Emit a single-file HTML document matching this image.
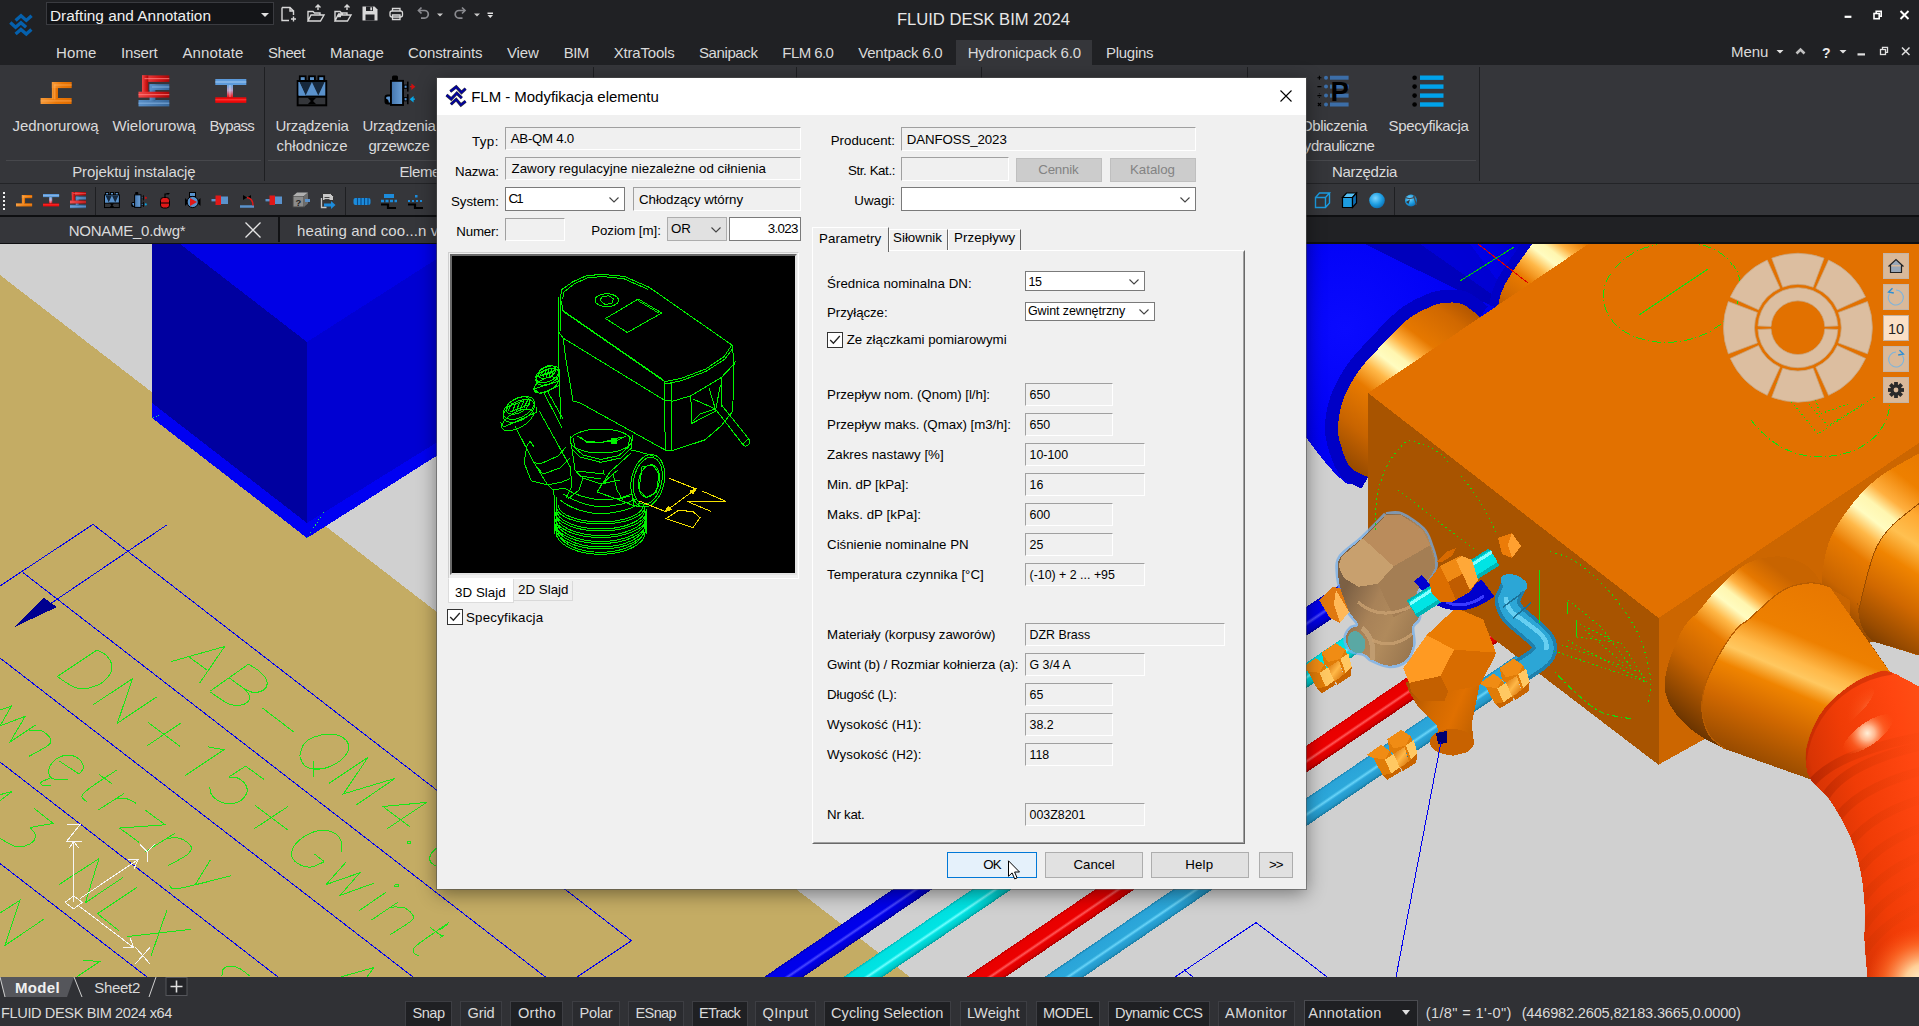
<!DOCTYPE html>
<html><head><meta charset="utf-8"><title>FLUID DESK BIM 2024</title>
<style>
html,body{margin:0;padding:0;}
body{width:1919px;height:1026px;overflow:hidden;position:relative;background:#35363a;font-family:"Liberation Sans",sans-serif;}
.t{position:absolute;white-space:pre;line-height:1;font-family:"Liberation Sans",sans-serif;}
.a{position:absolute;}
svg{position:absolute;overflow:visible;}

</style></head>
<body>
<svg style="left:0;top:244px" width="1919" height="733" viewBox="0 244 1919 733" shape-rendering="crispEdges">
<defs><linearGradient id="gBlueP" gradientUnits="userSpaceOnUse" x1="0" y1="0" x2="12.4" y2="18.2"><stop offset="0" stop-color="#0000b0"/><stop offset="0.1" stop-color="#0000e8"/><stop offset="0.5" stop-color="#0000ec"/><stop offset="0.6" stop-color="#4848ff"/><stop offset="0.7" stop-color="#0000e8"/><stop offset="0.9" stop-color="#0000d0"/><stop offset="1" stop-color="#0000a0"/></linearGradient><linearGradient id="gCyanP" gradientUnits="userSpaceOnUse" x1="0" y1="0" x2="12.4" y2="18.2"><stop offset="0" stop-color="#00b8b8"/><stop offset="0.1" stop-color="#00e0e0"/><stop offset="0.5" stop-color="#00e4e4"/><stop offset="0.6" stop-color="#70ffff"/><stop offset="0.7" stop-color="#00e0e0"/><stop offset="0.9" stop-color="#00c8c8"/><stop offset="1" stop-color="#00a0a0"/></linearGradient><linearGradient id="gRedP" gradientUnits="userSpaceOnUse" x1="0" y1="0" x2="12.4" y2="18.2"><stop offset="0" stop-color="#c00000"/><stop offset="0.1" stop-color="#e80000"/><stop offset="0.5" stop-color="#ec0000"/><stop offset="0.6" stop-color="#ff5858"/><stop offset="0.7" stop-color="#e80000"/><stop offset="0.9" stop-color="#d80000"/><stop offset="1" stop-color="#a80000"/></linearGradient><linearGradient id="gLbP" gradientUnits="userSpaceOnUse" x1="0" y1="0" x2="12.4" y2="18.2"><stop offset="0" stop-color="#1c84b0"/><stop offset="0.1" stop-color="#2aa4d8"/><stop offset="0.5" stop-color="#2ca8da"/><stop offset="0.6" stop-color="#68d4f8"/><stop offset="0.7" stop-color="#2aa4d8"/><stop offset="0.9" stop-color="#2498c8"/><stop offset="1" stop-color="#1c7ca4"/></linearGradient><linearGradient id="gCylA" gradientUnits="userSpaceOnUse" x1="1470" y1="300" x2="1340" y2="470"><stop offset="0" stop-color="#a85000"/><stop offset="0.12" stop-color="#d06800"/><stop offset="0.28" stop-color="#e67800"/><stop offset="0.35" stop-color="#ffb040"/><stop offset="0.41" stop-color="#fff6b0"/><stop offset="0.46" stop-color="#fffcc0"/><stop offset="0.53" stop-color="#ffb848"/><stop offset="0.62" stop-color="#e87a00"/><stop offset="0.8" stop-color="#c86400"/><stop offset="1" stop-color="#8a4400"/></linearGradient><linearGradient id="gCylB" gradientUnits="userSpaceOnUse" x1="1580" y1="215" x2="1500.4" y2="317.8"><stop offset="0" stop-color="#d86c00"/><stop offset="0.15" stop-color="#e67800"/><stop offset="0.27" stop-color="#ffb040"/><stop offset="0.35" stop-color="#fff6b0"/><stop offset="0.42" stop-color="#fffcc0"/><stop offset="0.52" stop-color="#ffb848"/><stop offset="0.65" stop-color="#e87a00"/><stop offset="0.85" stop-color="#d06800"/><stop offset="1" stop-color="#a85000"/></linearGradient><radialGradient id="gBlueBig" gradientUnits="userSpaceOnUse" cx="1345" cy="330" r="230" ><stop offset="0" stop-color="#0a0aff"/><stop offset="0.55" stop-color="#0000f4"/><stop offset="0.8" stop-color="#0000d8"/><stop offset="1" stop-color="#0000b0"/></radialGradient><linearGradient id="gC1" gradientUnits="userSpaceOnUse" x1="1760" y1="556" x2="1650" y2="698"><stop offset="0" stop-color="#c86400"/><stop offset="0.12" stop-color="#e67800"/><stop offset="0.2" stop-color="#ffb040"/><stop offset="0.26" stop-color="#fff6b0"/><stop offset="0.32" stop-color="#fffcc0"/><stop offset="0.4" stop-color="#ffb848"/><stop offset="0.5" stop-color="#e87a00"/><stop offset="0.7" stop-color="#c86400"/><stop offset="0.9" stop-color="#8a4400"/><stop offset="1" stop-color="#6a3400"/></linearGradient><linearGradient id="gCone" gradientUnits="userSpaceOnUse" x1="1830" y1="590" x2="1745" y2="790"><stop offset="0" stop-color="#e87800"/><stop offset="0.25" stop-color="#ee8000"/><stop offset="0.36" stop-color="#ffb848"/><stop offset="0.42" stop-color="#ffc860"/><stop offset="0.5" stop-color="#f08400"/><stop offset="0.65" stop-color="#d06800"/><stop offset="0.85" stop-color="#9a4c00"/><stop offset="1" stop-color="#6a3400"/></linearGradient><linearGradient id="gC3" gradientUnits="userSpaceOnUse" x1="1919" y1="440" x2="1800" y2="594"><stop offset="0" stop-color="#e87800"/><stop offset="0.2" stop-color="#ee8000"/><stop offset="0.33" stop-color="#ffb040"/><stop offset="0.4" stop-color="#fff6b0"/><stop offset="0.47" stop-color="#fffcc0"/><stop offset="0.55" stop-color="#ffb848"/><stop offset="0.66" stop-color="#e87a00"/><stop offset="0.85" stop-color="#c86400"/><stop offset="1" stop-color="#8a4400"/></linearGradient><linearGradient id="gC4" gradientUnits="userSpaceOnUse" x1="1940" y1="500" x2="1850" y2="640"><stop offset="0" stop-color="#e87800"/><stop offset="0.15" stop-color="#ffa830"/><stop offset="0.3" stop-color="#ffc050"/><stop offset="0.45" stop-color="#f08400"/><stop offset="0.65" stop-color="#d06800"/><stop offset="0.85" stop-color="#9a4c00"/><stop offset="1" stop-color="#6a3400"/></linearGradient><linearGradient id="gDuct" gradientUnits="userSpaceOnUse" x1="1800" y1="800" x2="1960" y2="760"><stop offset="0" stop-color="#a82400"/><stop offset="0.12" stop-color="#d83404"/><stop offset="0.35" stop-color="#f03c06"/><stop offset="0.7" stop-color="#ff4610"/><stop offset="1" stop-color="#ff5418"/></linearGradient><radialGradient id="gDuctHi" gradientUnits="userSpaceOnUse" cx="1868" cy="733" r="30" ><stop offset="0" stop-color="#fff0d8"/><stop offset="0.25" stop-color="#ffb890"/><stop offset="0.6" stop-color="rgba(255,110,50,.5)"/><stop offset="1" stop-color="rgba(255,80,20,0)"/></radialGradient><radialGradient id="gDuctHi2" gradientUnits="userSpaceOnUse" cx="1925" cy="985" r="60" ><stop offset="0" stop-color="#fffbe0"/><stop offset="0.35" stop-color="#ffd098"/><stop offset="0.7" stop-color="rgba(255,120,50,.6)"/><stop offset="1" stop-color="rgba(255,80,20,0)"/></radialGradient><linearGradient id="gAct2" gradientUnits="userSpaceOnUse" x1="1400" y1="690" x2="1490" y2="730"><stop offset="0" stop-color="#a04c00"/><stop offset="0.35" stop-color="#d06800"/><stop offset="0.6" stop-color="#e07000"/><stop offset="1" stop-color="#b05800"/></linearGradient><linearGradient id="gActS" gradientUnits="userSpaceOnUse" x1="1340" y1="600" x2="1425" y2="640"><stop offset="0" stop-color="#7c6044"/><stop offset="0.35" stop-color="#a88258"/><stop offset="0.6" stop-color="#b08a5c"/><stop offset="1" stop-color="#94724c"/></linearGradient><linearGradient id="gNut" gradientUnits="userSpaceOnUse" x1="0" y1="0" x2="10" y2="14"><stop offset="0" stop-color="#c86000"/><stop offset="0.4" stop-color="#ffa020"/><stop offset="0.6" stop-color="#e07000"/><stop offset="1" stop-color="#a85000"/></linearGradient></defs>
<rect x="0" y="244" width="1919" height="733" fill="#d0d0d0"/>
<polygon points="0,275 910,977 0,977" fill="#c4ac64"/>
<polygon points="180,244 460,244 307,342" fill="#0000e6"/>
<polygon points="152,244 180,244 307,342 307,523 152,403" fill="#0000a0"/>
<polygon points="307,342 460,244 460,428 307,523" fill="#0000d2"/>
<polygon points="152,403 307,523 460,428 460,441 307,538 152,418" fill="#0000f2"/>
<line x1="0" y1="586" x2="93" y2="524.4" stroke="#0000f0" stroke-width="1" />
<line x1="93" y1="524.4" x2="631.5" y2="940.7" stroke="#0000f0" stroke-width="1" />
<line x1="631.5" y1="940.7" x2="577" y2="977" stroke="#0000f0" stroke-width="1" />
<line x1="23" y1="572.6" x2="545.4" y2="977" stroke="#0000f0" stroke-width="1" />
<line x1="166.7" y1="525" x2="50" y2="604" stroke="#0000f0" stroke-width="1" />
<line x1="0" y1="658" x2="413" y2="977" stroke="#0000f0" stroke-width="1" />
<line x1="0" y1="762" x2="278" y2="977" stroke="#0000f0" stroke-width="1" />
<line x1="0" y1="863.5" x2="147" y2="977" stroke="#0000f0" stroke-width="1" />
<polygon points="44,598 57,607 14.5,627" fill="#000090"/>
<!--GREENTEXT-->
<g transform="translate(777.3,967.9) scale(1.000)"><line x1="-37.3" y1="38.7" x2="522.7" y2="-342.1" stroke="url(#gBlueP)" stroke-width="22"/></g>
<g transform="translate(856.8,967.9) scale(1.000)"><line x1="-36.8" y1="38.3" x2="443.2" y2="-288.1" stroke="url(#gCyanP)" stroke-width="22"/></g>
<g transform="translate(979.8,967.9) scale(1.000)"><line x1="-39.8" y1="40.4" x2="320.2" y2="-204.4" stroke="url(#gRedP)" stroke-width="22"/></g>
<g transform="translate(1057.8,967.9) scale(1.000)"><line x1="-37.8" y1="39.0" x2="242.2" y2="-151.4" stroke="url(#gLbP)" stroke-width="22"/></g>
<g transform="translate(776.8,967.1) scale(1.091)"><line x1="479.6" y1="-312.9" x2="525.5" y2="-344.0" stroke="url(#gBlueP)" stroke-width="22"/></g>
<g transform="translate(857.1,968.3) scale(0.955)"><line x1="464.0" y1="-302.2" x2="533.1" y2="-349.2" stroke="url(#gCyanP)" stroke-width="22"/></g>
<g transform="translate(979.8,967.9) scale(1.000)"><line x1="320.2" y1="-204.4" x2="532.2" y2="-348.6" stroke="url(#gRedP)" stroke-width="22"/></g>
<g transform="translate(1057.5,967.5) scale(1.045)"><line x1="231.9" y1="-144.4" x2="453.8" y2="-295.3" stroke="url(#gLbP)" stroke-width="22"/></g>
<path d="M1300.0,430.0 C1301.0,431.2 1301.8,432.2 1306.0,437.5 C1310.2,442.8 1319.3,455.2 1325.0,462.0 C1330.7,468.8 1335.7,474.2 1340.0,478.0 C1344.3,481.8 1346.3,484.5 1351.0,484.5 C1355.7,484.5 1365.2,479.1 1368.0,478.0 L1368,393 L1498,307 L1505,285 L1532,244 L1300,244 Z" fill="url(#gBlueBig)" />
<path d="M1365,244 L1420,244 L1500,300 L1497,308 L1470,296 Z" fill="#0000a8" opacity=".75"/>
<path d="M1420,244 L1470,244 L1503,288 L1500,300 Z" fill="#0000cc" opacity=".75"/>
<path d="M1368.0,477.0 C1365.2,475.5 1355.3,472.7 1351.0,468.0 C1346.7,463.3 1344.2,455.7 1342.0,449.0 C1339.8,442.3 1337.8,436.2 1338.0,428.0 C1338.2,419.8 1339.7,409.3 1343.0,400.0 C1346.3,390.7 1352.2,380.5 1358.0,372.0 C1363.8,363.5 1369.8,357.7 1378.0,349.0 C1386.2,340.3 1398.3,327.0 1407.0,320.0 C1415.7,313.0 1423.8,309.8 1430.0,307.0 C1436.2,304.2 1438.7,303.5 1444.0,303.0 C1449.3,302.5 1456.0,301.7 1462.0,304.0 C1468.0,306.3 1477.0,314.8 1480.0,317.0" fill="none" stroke="#0000c6" stroke-width="26"/>
<path d="M1498.0,307.0 C1498.3,305.3 1498.9,300.7 1500.0,297.0 C1501.1,293.3 1502.3,289.7 1504.7,285.0 C1507.1,280.3 1509.9,275.8 1514.4,269.0 C1519.0,262.2 1529.1,248.2 1532.0,244.0" fill="none" stroke="#0000c6" stroke-width="18"/>
<path d="M1368.0,477.0 C1365.2,475.5 1355.3,472.7 1351.0,468.0 C1346.7,463.3 1344.2,455.7 1342.0,449.0 C1339.8,442.3 1337.8,436.2 1338.0,428.0 C1338.2,419.8 1339.7,409.3 1343.0,400.0 C1346.3,390.7 1352.2,380.5 1358.0,372.0 C1363.8,363.5 1369.8,357.7 1378.0,349.0 C1386.2,340.3 1398.3,327.0 1407.0,320.0 C1415.7,313.0 1423.8,309.8 1430.0,307.0 C1436.2,304.2 1438.7,303.5 1444.0,303.0 C1449.3,302.5 1456.0,301.7 1462.0,304.0 C1468.0,306.3 1477.0,314.8 1480.0,317.0 L1492,326 L1376,404 Z" fill="url(#gCylA)" />
<path d="M1498.0,307.0 C1498.3,305.3 1498.9,300.7 1500.0,297.0 C1501.1,293.3 1502.3,289.7 1504.7,285.0 C1507.1,280.3 1509.9,275.8 1514.4,269.0 C1519.0,262.2 1529.1,248.2 1532.0,244.0 L1600,244 L1600,255 L1506,318 Z" fill="url(#gCylB)" />
<line x1="1478" y1="244" x2="1528" y2="283" stroke="#e00000" stroke-width="1" />
<line x1="1460" y1="281" x2="1514" y2="247" stroke="#00d000" stroke-width="1" />
<path d="M1368,393 L1588.5,244 L1919,244 L1919,443 L1658.5,618 Z" fill="#e27100" />
<path d="M1368,393 L1658.5,618 L1658.5,764.7 L1368,543 Z" fill="#a85400" />
<path d="M1658.5,618 L1919,443 L1919,620 L1658.5,764.7 Z" fill="#cc6600" />
<path d="M1822.0,600.0 C1822.0,596.0 1821.0,585.2 1822.0,576.0 C1823.0,566.8 1825.0,553.9 1828.0,544.8 C1831.0,535.7 1834.6,529.5 1839.8,521.4 C1845.0,513.3 1851.8,503.8 1859.0,496.0 C1866.2,488.2 1871.7,482.3 1882.7,474.6 C1893.7,466.9 1918.0,454.1 1925.0,450.0 L1925,700 L1822,700 Z" fill="url(#gC3)" />
<path d="M1925.0,499.0 C1919.6,503.4 1900.4,517.3 1892.4,525.3 C1884.4,533.2 1881.0,538.2 1876.8,546.7 C1872.6,555.2 1870.0,565.5 1867.0,576.0 C1864.0,586.5 1860.3,604.3 1859.0,610.0 L1857,600 1857.0,600.0 C1857.7,604.2 1858.3,618.2 1861.0,625.0 C1863.7,631.8 1867.8,637.4 1873.0,641.0 C1878.2,644.6 1883.7,644.1 1892.4,646.8 C1901.1,649.5 1919.6,655.3 1925.0,657.0 Z" fill="url(#gC4)" />
<path d="M1925.0,499.0 C1919.6,503.4 1900.4,517.3 1892.4,525.3 C1884.4,533.2 1881.0,538.2 1876.8,546.7 C1872.6,555.2 1870.0,565.5 1867.0,576.0 C1864.0,586.5 1860.3,604.3 1859.0,610.0" fill="none" stroke="#9a4c00" stroke-width="1"/>
<path d="M1869.0,641.5 L1873.0,641.5 L1892.4,647.3 L1925.0,657.5 L1925.0,710.0 L1892.6,675.6 Z" fill="#d0d0d0" />
<path d="M1822.0,583.7 C1820.0,581.1 1814.5,572.0 1810.0,568.0 C1805.5,564.0 1800.8,561.9 1795.0,560.0 C1789.2,558.1 1783.6,555.8 1775.4,556.5 C1767.2,557.2 1755.7,558.5 1746.0,564.0 C1736.3,569.5 1725.0,581.6 1717.0,589.6 C1709.0,597.6 1703.5,605.7 1698.0,612.0 C1692.5,618.3 1688.5,619.5 1683.8,627.3 C1679.1,635.0 1673.1,649.4 1670.0,658.5 C1666.9,667.6 1665.3,674.9 1665.0,682.0 C1664.7,689.1 1665.2,694.5 1668.0,701.0 C1670.8,707.5 1676.5,715.1 1682.0,721.0 C1687.5,726.9 1693.8,731.8 1701.0,736.5 C1708.2,741.2 1721.0,746.9 1725.0,749.0 L1850,700 L1850,600 Z" fill="url(#gC1)" />
<path d="M1829.6,586.7 C1827.7,586.2 1821.7,584.1 1818.0,583.5 C1814.3,582.9 1812.2,582.4 1807.5,583.0 C1802.8,583.6 1795.3,584.9 1790.0,587.0 C1784.7,589.1 1782.4,589.9 1775.4,595.4 C1768.4,600.9 1754.5,614.4 1748.0,620.0 C1741.5,625.6 1741.7,622.6 1736.5,629.0 C1731.3,635.4 1722.2,649.0 1717.0,658.5 C1711.8,668.0 1707.5,677.2 1705.0,686.0 C1702.5,694.8 1701.3,702.9 1702.0,711.0 C1702.7,719.1 1705.2,728.2 1709.0,734.5 C1712.8,740.8 1722.3,746.6 1725.0,749.0 L1810.5,779.3 L1892.6,675.6 Z" fill="url(#gCone)" />
<path d="M1829.6,586.7 C1827.7,586.2 1821.7,584.1 1818.0,583.5 C1814.3,582.9 1812.2,582.4 1807.5,583.0 C1802.8,583.6 1795.3,584.9 1790.0,587.0 C1784.7,589.1 1782.4,589.9 1775.4,595.4 C1768.4,600.9 1754.5,614.4 1748.0,620.0 C1741.5,625.6 1741.7,622.6 1736.5,629.0 C1731.3,635.4 1722.2,649.0 1717.0,658.5 C1711.8,668.0 1707.5,677.2 1705.0,686.0 C1702.5,694.8 1701.3,702.9 1702.0,711.0 C1702.7,719.1 1705.2,728.2 1709.0,734.5 C1712.8,740.8 1722.3,746.6 1725.0,749.0" fill="none" stroke="#b85c00" stroke-width="1.2"/>
<path d="M1925.0,690.0 C1919.2,687.0 1899.1,674.7 1890.4,672.0 C1881.7,669.3 1879.8,671.7 1873.0,674.0 C1866.2,676.3 1857.7,680.0 1849.5,685.8 C1841.3,691.6 1830.7,700.5 1824.0,709.0 C1817.3,717.5 1812.6,728.0 1809.6,736.5 C1806.5,745.0 1805.5,752.7 1805.7,759.8 C1805.9,766.9 1806.6,772.8 1810.5,779.3 C1814.4,785.8 1822.8,790.3 1829.0,799.0 C1835.2,807.7 1843.2,821.4 1848.0,831.6 C1852.8,841.8 1855.5,850.9 1858.0,860.0 C1860.5,869.1 1861.8,877.3 1863.0,886.5 C1864.2,895.7 1864.8,905.9 1865.0,915.0 C1865.2,924.1 1864.0,930.2 1864.5,941.0 C1865.0,951.8 1867.2,973.5 1867.7,980.0 L1925,980 Z" fill="url(#gDuct)" />
<defs><linearGradient id="gRing" gradientUnits="userSpaceOnUse" x1="1800" y1="0" x2="1925" y2="0"><stop offset="0" stop-color="#a01c00" stop-opacity=".7"/><stop offset=".45" stop-color="#c83000" stop-opacity=".35"/><stop offset="1" stop-color="#e04008" stop-opacity=".05"/></linearGradient><clipPath id="cDuct"><path d="M1925.0,690.0 C1919.2,687.0 1899.1,674.7 1890.4,672.0 C1881.7,669.3 1879.8,671.7 1873.0,674.0 C1866.2,676.3 1857.7,680.0 1849.5,685.8 C1841.3,691.6 1830.7,700.5 1824.0,709.0 C1817.3,717.5 1812.6,728.0 1809.6,736.5 C1806.5,745.0 1805.5,752.7 1805.7,759.8 C1805.9,766.9 1806.6,772.8 1810.5,779.3 C1814.4,785.8 1822.8,790.3 1829.0,799.0 C1835.2,807.7 1843.2,821.4 1848.0,831.6 C1852.8,841.8 1855.5,850.9 1858.0,860.0 C1860.5,869.1 1861.8,877.3 1863.0,886.5 C1864.2,895.7 1864.8,905.9 1865.0,915.0 C1865.2,924.1 1864.0,930.2 1864.5,941.0 C1865.0,951.8 1867.2,973.5 1867.7,980.0 L1925,980 Z"/></clipPath></defs>
<g clip-path="url(#cDuct)" shape-rendering="auto">
<path d="M1807,790 Q1827,754 1925,736" fill="none" stroke="url(#gRing)" stroke-width="9"/>
<path d="M1824,799 Q1844,763 1925,745" fill="none" stroke="url(#gRing)" stroke-width="9"/>
<path d="M1833.7,824 Q1853.7,788 1925,770" fill="none" stroke="url(#gRing)" stroke-width="9"/>
<path d="M1844.6,852 Q1864.6,816 1925,798" fill="none" stroke="url(#gRing)" stroke-width="9"/>
<path d="M1852.4,880.5 Q1872.4,844.5 1925,826.5" fill="none" stroke="url(#gRing)" stroke-width="9"/>
<path d="M1857,908.6 Q1877,872.6 1925,854.6" fill="none" stroke="url(#gRing)" stroke-width="9"/>
<path d="M1859.6,933.6 Q1879.6,897.6 1925,879.6" fill="none" stroke="url(#gRing)" stroke-width="9"/>
<path d="M1860,958.6 Q1880,922.6 1925,904.6" fill="none" stroke="url(#gRing)" stroke-width="9"/>
<path d="M1803,760 Q1810,712 1850,686 Q1870,674 1892,671" fill="none" stroke="#b02400" stroke-width="7" opacity=".4"/>
</g>
<ellipse cx="1868" cy="734" rx="30" ry="11" fill="url(#gDuctHi)" transform="rotate(-36 1868 734)"/>
<ellipse cx="1848" cy="712" rx="34" ry="9" fill="url(#gDuctHi)" opacity=".45" transform="rotate(-42 1848 712)"/>
<circle cx="1925" cy="985" r="60" fill="url(#gDuctHi2)"/>
<path d="M1514,585 L1507,600 Q1509,613 1522,622 L1536,634 Q1553,648 1537,660 L1516,674" fill="none" stroke="#1f80ac" stroke-width="25" stroke-linejoin="round"/>
<path d="M1514,585 L1507,600 Q1509,613 1522,622 L1536,634 Q1553,648 1537,660 L1516,674" fill="none" stroke="#2ca6d6" stroke-width="18" stroke-linejoin="round"/>
<path d="M1506,597 Q1506,611 1520,618 L1536,630 Q1549,640 1546,650" fill="none" stroke="#66cff2" stroke-width="4.5"/>
<ellipse cx="1514" cy="583" rx="14" ry="8" fill="#2ca6d6" transform="rotate(20 1514 583)"/>
<path d="M1503,607 L1521,594 M1513,618 L1531,603" stroke="#1b7096" stroke-width="1.5"/>
<defs><linearGradient id="gNutM" x1="0" y1="0" x2="1" y2="1"><stop offset="0" stop-color="#d06800"/><stop offset=".5" stop-color="#ffb848"/><stop offset="1" stop-color="#d06800"/></linearGradient></defs>
<path d="M1301.5,668.2 L1315.6,658.1 L1324.2,664.3 L1334.3,680.7 L1335.9,684.6 L1321.8,693.2 L1317.1,688.5 L1307.8,671.3 Z" fill="#e07c08" />
<path d="M1301.5,668.2 L1315.6,658.1 L1324.2,664.3 L1319.5,672.9 L1307.8,671.3 Z" fill="#f08c14" />
<path d="M1319.5,672.9 L1328.1,667.4 L1334.3,680.7 L1325.7,686.9 Z" fill="#ffc862" />
<path d="M1325.7,686.9 L1334.3,680.7 L1335.9,684.6 L1321.8,693.2 L1317.1,688.5 Z" fill="#c86400" />
<path d="M1321.8,652.6 L1335.9,643.2 L1345.2,649.5 L1351.8,666.6 L1350.7,676.0 L1337.4,684.6 L1334.3,680.7 L1343.7,675.2 L1339.0,660.4 L1328.1,667.4 L1324.2,664.3 Z" fill="#e07c08" />
<path d="M1328.1,667.4 L1339.0,660.4 L1343.7,676.0 L1334.3,680.7 Z" fill="url(#gNutM)" />
<path d="M1321.8,652.6 L1335.9,643.2 L1345.2,649.5 L1340.5,658.8 L1328.1,662.0 Z" fill="#f08c14" />
<path d="M1340.5,658.8 L1348.3,653.4 L1351.8,666.6 L1345.5,672.9 Z" fill="#ffc862" />
<path d="M1345.5,672.9 L1351.8,666.6 L1350.7,676.0 L1337.4,684.6 L1335.9,680.7 Z" fill="#c86400" />
<path d="M1367.0,754.8 L1381.1,744.7 L1389.7,750.9 L1399.8,767.3 L1401.4,771.2 L1387.3,779.8 L1382.6,775.1 L1373.3,757.9 Z" fill="#e07c08" />
<path d="M1367.0,754.8 L1381.1,744.7 L1389.7,750.9 L1385.0,759.5 L1373.3,757.9 Z" fill="#f08c14" />
<path d="M1385.0,759.5 L1393.6,754.0 L1399.8,767.3 L1391.2,773.5 Z" fill="#ffc862" />
<path d="M1391.2,773.5 L1399.8,767.3 L1401.4,771.2 L1387.3,779.8 L1382.6,775.1 Z" fill="#c86400" />
<path d="M1387.3,739.2 L1401.4,729.8 L1410.7,736.1 L1417.3,753.2 L1416.2,762.6 L1402.9,771.2 L1399.8,767.3 L1409.2,761.8 L1404.5,747.0 L1393.6,754.0 L1389.7,750.9 Z" fill="#e07c08" />
<path d="M1393.6,754.0 L1404.5,747.0 L1409.2,762.6 L1399.8,767.3 Z" fill="url(#gNutM)" />
<path d="M1387.3,739.2 L1401.4,729.8 L1410.7,736.1 L1406.0,745.4 L1393.6,748.6 Z" fill="#f08c14" />
<path d="M1406.0,745.4 L1413.8,740.0 L1417.3,753.2 L1411.0,759.5 Z" fill="#ffc862" />
<path d="M1411.0,759.5 L1417.3,753.2 L1416.2,762.6 L1402.9,771.2 L1401.4,767.3 Z" fill="#c86400" />
<path d="M1479.3,683.6 L1493.4,673.5 L1502.0,679.7 L1512.1,696.1 L1513.7,700.0 L1499.6,708.6 L1494.9,703.9 L1485.6,686.7 Z" fill="#e07c08" />
<path d="M1479.3,683.6 L1493.4,673.5 L1502.0,679.7 L1497.3,688.3 L1485.6,686.7 Z" fill="#f08c14" />
<path d="M1497.3,688.3 L1505.9,682.8 L1512.1,696.1 L1503.5,702.3 Z" fill="#ffc862" />
<path d="M1503.5,702.3 L1512.1,696.1 L1513.7,700.0 L1499.6,708.6 L1494.9,703.9 Z" fill="#c86400" />
<path d="M1499.6,668.0 L1513.7,658.6 L1523.0,664.9 L1529.6,682.0 L1528.5,691.4 L1515.2,700.0 L1512.1,696.1 L1521.5,690.6 L1516.8,675.8 L1505.9,682.8 L1502.0,679.7 Z" fill="#e07c08" />
<path d="M1505.9,682.8 L1516.8,675.8 L1521.5,691.4 L1512.1,696.1 Z" fill="url(#gNutM)" />
<path d="M1499.6,668.0 L1513.7,658.6 L1523.0,664.9 L1518.3,674.2 L1505.9,677.4 Z" fill="#f08c14" />
<path d="M1518.3,674.2 L1526.1,668.8 L1529.6,682.0 L1523.3,688.3 Z" fill="#ffc862" />
<path d="M1523.3,688.3 L1529.6,682.0 L1528.5,691.4 L1515.2,700.0 L1513.7,696.1 Z" fill="#c86400" />
<path d="M1405.3,681.9 L1409.2,691.6 L1417.0,705.3 L1426.7,715.0 L1436.5,724.8 L1442.3,744.2 L1452.0,755.9 L1467.6,752.0 L1473.5,736.5 L1471.5,724.8 L1479.3,685.8 L1494.9,656.5 L1440.4,676.0 Z" fill="url(#gAct2)" />
<path d="M1455.9,607.8 L1483.2,619.5 L1495.9,652.6 L1494.9,656.5 L1440.4,676.0 L1409.2,682.8 L1403.3,668.2 L1426.7,635.1 Z" fill="#ea7c04" />
<path d="M1426.7,635.1 L1454.0,649.7 L1440.4,676.0 L1409.2,682.8 L1403.3,668.2 Z" fill="#ff9a22" />
<path d="M1454.0,649.7 L1495.9,652.6 L1494.9,656.5 L1479.3,685.8 L1448.1,691.6 L1440.4,676.0 Z" fill="#d86c00" />
<path d="M1409.2,682.8 L1440.4,676.0 L1448.1,691.6 L1444.2,701.4 L1420.9,701.4 L1411.1,691.6 Z" fill="#c46000" />
<ellipse cx="1452" cy="742" rx="22" ry="13" fill="#c86200"/>
<polygon points="1436,733 1447,731 1447,743 1438,744" fill="#000070"/>
<line x1="1441" y1="742" x2="1396" y2="977" stroke="#0000f0" stroke-width="1" />
<line x1="1300" y1="956" x2="1327" y2="977" stroke="#0000f0" stroke-width="1" />
<path d="M1385.8,514.6 C1388.4,514.6 1395.2,512.2 1401.4,514.6 C1407.5,517.1 1417.9,524.2 1422.8,529.2 C1427.7,534.3 1428.5,538.8 1430.6,544.8 C1432.7,550.8 1436.1,559.1 1435.5,565.3 C1434.8,571.5 1429.8,577.5 1426.7,581.9 C1423.6,586.3 1418.3,585.8 1417.0,591.6 C1415.7,597.5 1419.7,611.1 1418.9,617.0 C1418.1,622.8 1413.1,622.2 1412.1,626.7 C1411.1,631.3 1414.0,638.7 1413.1,644.2 C1412.1,649.8 1410.1,656.3 1406.2,659.8 C1402.3,663.4 1395.4,665.7 1389.7,665.7 C1384.0,665.7 1376.3,661.8 1372.1,659.8 C1367.9,657.9 1367.9,655.6 1364.3,654.0 C1360.8,652.4 1353.8,652.7 1350.7,650.1 C1347.6,647.5 1345.8,642.0 1345.8,638.4 C1345.8,634.8 1348.6,630.9 1350.7,628.7 C1352.8,626.4 1358.8,627.7 1358.5,624.8 C1358.2,621.8 1351.5,616.3 1348.7,611.1 C1346.0,605.9 1343.7,600.1 1341.9,593.6 C1340.1,587.1 1338.2,578.3 1338.0,572.1 C1337.8,566.0 1336.9,562.2 1340.9,556.5 C1345.0,550.8 1354.9,545.0 1362.4,538.0 C1369.9,531.0 1381.9,518.5 1385.8,514.6" fill="none" stroke="#74aee8" stroke-width="5" opacity=".75" shape-rendering="auto"/>
<path d="M1385.8,514.6 C1388.4,514.6 1395.2,512.2 1401.4,514.6 C1407.5,517.1 1417.9,524.2 1422.8,529.2 C1427.7,534.3 1428.5,538.8 1430.6,544.8 C1432.7,550.8 1436.1,559.1 1435.5,565.3 C1434.8,571.5 1429.8,577.5 1426.7,581.9 C1423.6,586.3 1418.3,585.8 1417.0,591.6 C1415.7,597.5 1419.7,611.1 1418.9,617.0 C1418.1,622.8 1413.1,622.2 1412.1,626.7 C1411.1,631.3 1414.0,638.7 1413.1,644.2 C1412.1,649.8 1410.1,656.3 1406.2,659.8 C1402.3,663.4 1395.4,665.7 1389.7,665.7 C1384.0,665.7 1376.3,661.8 1372.1,659.8 C1367.9,657.9 1367.9,655.6 1364.3,654.0 C1360.8,652.4 1353.8,652.7 1350.7,650.1 C1347.6,647.5 1345.8,642.0 1345.8,638.4 C1345.8,634.8 1348.6,630.9 1350.7,628.7 C1352.8,626.4 1358.8,627.7 1358.5,624.8 C1358.2,621.8 1351.5,616.3 1348.7,611.1 C1346.0,605.9 1343.7,600.1 1341.9,593.6 C1340.1,587.1 1338.2,578.3 1338.0,572.1 C1337.8,566.0 1336.9,562.2 1340.9,556.5 C1345.0,550.8 1354.9,545.0 1362.4,538.0 C1369.9,531.0 1381.9,518.5 1385.8,514.6" fill="url(#gActS)" />
<path d="M1385.8,515.2 L1401.4,515.2 L1422.4,529.6 L1430.2,545.2 L1393.6,566.3 L1362.8,538.4 Z" fill="#ba8c5c" />
<path d="M1362.8,538.4 L1393.6,566.3 L1378.0,583.8 L1358.5,586.7 L1343.9,578.0 L1338.6,566.3 L1341.3,556.9 Z" fill="#c8a06e" />
<path d="M1393.6,566.3 L1430.2,545.2 L1434.9,565.3 L1426.3,581.5 L1416.6,591.2 L1409.2,609.2 L1393.6,617.0 L1378.0,583.8 Z" fill="#a47e54" />
<ellipse cx="1356.500" cy="642.300" rx="8.500" ry="11.500" fill="#5aa8a4" transform="rotate(-20 1356.500 642.300)"/>
<path d="M1362,628 Q1376,640 1372,660" fill="none" stroke="#c09c70" stroke-width="5"/>
<path d="M1358,602 Q1380,622 1412,606 M1372,640 Q1392,650 1412,634" fill="none" stroke="#c8a070" stroke-width="3" opacity=".8"/>
<path d="M1418,578 L1428,590" fill="none" stroke="#0000d0" stroke-width="10"/>
<path d="M1438,594 Q1462,608 1488,588" fill="none" stroke="#0000cc" stroke-width="21"/>
<path d="M1446,602 Q1464,610 1484,596" fill="none" stroke="#3a3aff" stroke-width="3"/>
<line x1="1412" y1="609" x2="1494" y2="557" stroke="#00b4b4" stroke-width="20"/>
<line x1="1412" y1="608" x2="1494" y2="556" stroke="#00e4e4" stroke-width="14"/>
<line x1="1410" y1="604" x2="1492" y2="552" stroke="#86ffff" stroke-width="3"/>
<path d="M1429.0,580.0 L1440.0,566.0 L1460.0,556.0 L1472.0,560.0 L1478.0,580.0 L1470.0,592.0 L1452.0,602.0 L1440.0,602.0 L1432.0,594.0 Z" fill="#dc6e00" />
<path d="M1440.0,566.0 L1460.0,556.0 L1466.0,572.0 L1448.0,582.0 Z" fill="#f08a14" />
<path d="M1448.0,582.0 L1466.0,572.0 L1472.0,590.0 L1456.0,600.0 Z" fill="#c05c00" />
<path d="M1456.0,560.0 L1462.0,556.0 L1472.0,560.0 L1478.0,580.0 L1470.0,590.0 Z" fill="#ffa838" />
<path d="M1436.0,562.0 L1446.0,552.0 L1456.0,548.0 L1452.0,556.0 L1442.0,562.0 Z" fill="#d86a00" />
<path d="M1498.0,538.0 L1512.0,533.0 L1521.0,546.0 L1512.0,558.0 L1502.0,554.0 Z" fill="#ec7c08" />
<path d="M1512.0,533.0 L1521.0,546.0 L1512.0,558.0 L1508.0,545.0 Z" fill="#ffa030" />
<path d="M1319.0,600.0 L1332.0,587.0 L1340.0,588.0 L1349.0,612.0 L1340.0,623.0 L1330.0,618.0 Z" fill="#e07810" />
<path d="M1336.0,590.0 L1349.0,612.0 L1340.0,623.0 L1334.0,604.0 Z" fill="#ffb858" />
<ellipse cx="1672" cy="292" rx="69" ry="50" fill="none" stroke="#10e010" stroke-width="1" stroke-dasharray="9 3 1 3" transform="rotate(-8 1672 292)"/>
<line x1="1639" y1="315" x2="1708" y2="269" stroke="#10e010" stroke-width="1" />
<path d="M1751,420 Q1790,470 1850,452 Q1895,435 1890,385" fill="none" stroke="#10e010" stroke-width="1" stroke-dasharray="8 3 1 3"/>
<path d="M1776,383 L1818,434 L1876,396 M1793,386 L1828,426 L1863,404 M1812,388 L1820,414 L1848,404" fill="none" stroke="#10e010" stroke-width="1" stroke-dasharray="1.5 2.5"/>
<path d="M1376,530 Q1372,470 1408,440 Q1440,448 1448,462" fill="none" stroke="#10e010" stroke-width="1" stroke-dasharray="1.5 3.5"/>
<path d="M1398,490 L1475,550 M1461,476 Q1482,500 1497,535" fill="none" stroke="#10e010" stroke-width="1" stroke-dasharray="1.5 3.5"/>
<path d="M1539.700,570.400 V623 M1567.800,602 V613.600 M1576.400,619.500 V637" fill="none" stroke="#10e010" stroke-width="1"/>
<path d="M1550.0,551.7 C1554.1,553.2 1565.6,555.1 1574.8,561.0 C1584.0,566.9 1596.0,577.5 1605.0,586.8 C1614.0,596.1 1622.3,607.3 1628.6,617.0 C1634.9,626.7 1638.9,634.5 1642.6,645.0 C1646.3,655.5 1649.8,670.2 1650.8,680.0 C1651.8,689.8 1648.8,699.7 1648.4,703.6" fill="none" stroke="#10e010" stroke-width="1" stroke-dasharray="1.5 4"/>
<path d="M1631.0,718.8 C1625.9,717.6 1609.9,716.3 1600.5,711.8 C1591.1,707.3 1582.6,698.8 1574.8,692.0 C1567.0,685.2 1557.3,674.5 1553.8,671.0" fill="none" stroke="#10e010" stroke-width="1" stroke-dasharray="6 3 1.5 3"/>
<path d="M1553.800,651 L1647.300,682.600 M1567.800,640.500 L1647.300,682.600 M1577,637 L1621.500,643 L1647.300,682.600 M1568,600 L1600,626 L1632,668 M1576,622 L1612,640 M1585,630 L1625,665 M1562,645 L1640,672" fill="none" stroke="#10e010" stroke-width="1" stroke-dasharray="1.500 3"/>
<line x1="1175" y1="977" x2="1256" y2="922.6" stroke="#0000f0" stroke-width="1" />
<line x1="1256" y1="922.6" x2="1300" y2="956" stroke="#0000f0" stroke-width="1" />
<line x1="1184" y1="969.7" x2="1193" y2="977" stroke="#0000f0" stroke-width="1" />
<g fill="none" stroke="#18e818" stroke-width="1"><path d="M171.4,661.5 L224.6,646.5 L199.5,683.3"/><path d="M189.1,656.9 L206.9,670.0"/><path d="M209.6,691.5 L248.4,664.2"/><path d="M248.4,664.2 C250.3,665.5 257.0,669.0 260.1,671.9 C263.2,674.7 266.3,678.5 266.9,681.4 C267.6,684.4 266.5,687.8 264.2,689.6 C261.9,691.4 256.7,692.6 253.3,692.3 C249.9,692.1 247.7,690.7 243.7,688.3 C239.7,685.8 231.7,679.6 229.3,677.9"/><path d="M243.7,688.3 C244.7,689.4 248.5,692.8 249.2,695.1 C249.9,697.4 249.7,700.2 247.8,701.9 C246.0,703.6 241.7,705.2 238.3,705.4 C234.9,705.7 232.1,705.6 227.4,703.3 C222.6,700.9 212.6,693.5 209.6,691.5"/><path d="M262.3,707.9 L293.7,731.9"/><path d="M299.7,756.5 C300.4,754.5 301.3,747.5 303.8,744.2 C306.3,740.9 310.2,738.5 314.7,736.8 C319.3,735.2 326.3,733.9 331.1,734.1 C335.9,734.3 340.4,735.8 343.4,737.9 C346.3,740.1 348.8,743.6 348.8,746.9 C348.8,750.3 346.3,754.7 343.4,757.9 C340.4,761.1 335.4,764.1 331.1,766.1 C326.8,768.0 321.8,769.3 317.5,769.3 C313.1,769.3 308.1,768.2 305.2,766.1 C302.2,763.9 300.6,758.1 299.7,756.5"/><path d="M313.9,761.1 L313.9,777.0"/><path d="M312.0,768.8 L322.4,768.8"/><path d="M329.2,783.3 L368.0,757.3 L343.4,793.9 L395.3,778.3 L356.5,804.8"/><path d="M387.1,828.8 L426.7,802.4 L383.0,806.5 L409.7,826.7"/><path d="M407.5,841.1 L410.3,841.1 L410.3,843.9 L407.5,843.9 L407.5,841.1"/><path d="M255.2,805.6 L287.4,829.7"/><path d="M254.1,828.8 L288.0,806.5"/><path d="M342.0,852.1 C341.8,850.0 342.5,843.2 340.7,839.8 C338.8,836.4 335.4,832.9 331.1,831.6 C326.8,830.2 320.2,830.0 314.7,831.6 C309.3,833.2 302.2,837.5 298.3,841.1 C294.5,844.8 291.7,849.8 291.5,853.4 C291.3,857.1 293.8,860.7 297.0,863.0 C300.2,865.2 306.1,867.3 310.6,867.1 C315.2,866.8 322.0,862.5 324.3,861.6"/><path d="M324.3,861.6 L314.7,854.2"/><path d="M345.9,862.2 L326.2,884.5 L359.8,872.8 L340.1,895.4 L373.6,883.3"/><path d="M386.0,892.2 L359.0,910.8"/><path d="M394.8,884.5 L398.4,884.5 L398.4,886.7 L394.8,886.7 L394.8,884.5"/><path d="M397.7,902.4 L371.4,920.0"/><path d="M389.7,907.1 C392.1,907.2 400.3,906.4 404.3,907.8 C408.2,909.3 412.3,913.6 413.3,915.9 C414.3,918.2 414.0,918.5 410.1,921.7 C406.2,924.9 393.4,932.6 390.1,934.8"/><path d="M448.8,922.7 C443.8,926.2 424.8,939.1 418.9,943.6 C412.9,948.0 414.0,947.7 413.3,949.4 C412.6,951.1 413.5,952.8 414.5,953.8 C415.4,954.8 418.1,955.4 418.9,955.7"/><path d="M430.2,927.5 L442.5,936.6"/><path d="M221.9,976.4 C222.1,975.2 221.9,970.8 223.3,969.1 C224.8,967.4 228.0,966.3 230.6,966.2 C233.3,966.1 236.1,966.7 239.4,968.4 C242.7,970.1 248.5,975.1 250.3,976.4"/><path d="M340.8,976.9 L373.6,967.7 L367.1,976.9"/><path d="M436.4,848.0 C435.4,849.1 431.5,852.3 430.5,854.6 C429.5,856.9 429.5,859.9 430.5,861.9 C431.5,863.8 435.4,865.5 436.4,866.3"/><path d="M57.3,676.5 L96.9,650.0"/><path d="M96.9,650.0 C98.5,650.9 104.0,652.8 106.5,655.5 C109.0,658.2 111.7,662.8 111.9,666.4 C112.2,670.1 110.3,674.1 107.8,677.3 C105.3,680.5 101.2,683.6 96.9,685.5 C92.6,687.4 86.2,688.8 81.9,688.8 C77.6,688.8 75.1,687.6 71.0,685.5 C66.9,683.5 59.6,678.0 57.3,676.5"/><path d="M93.4,704.6 L132.4,678.7 L117.4,723.2 L156.4,697.0"/><path d="M148.2,722.4 L180.2,746.4"/><path d="M147.4,745.6 L180.7,723.2"/><path d="M185.1,775.6 L223.9,749.7 L208.0,746.9"/><path d="M264.3,779.7 L245.7,766.1 L228.8,777.0"/><path d="M228.8,777.0 C230.4,777.2 235.4,776.7 238.3,778.3 C241.3,779.9 245.4,783.6 246.5,786.5 C247.7,789.5 247.0,793.4 245.2,796.1 C243.3,798.8 239.5,801.9 235.6,802.9 C231.7,804.0 226.0,803.7 221.9,802.4 C217.9,801.0 213.6,797.4 211.6,794.7 C209.5,792.1 210.0,787.9 209.7,786.5"/><path d="M0.0,710.1 L11.5,706.0 L0.0,725.9"/><path d="M0.0,725.9 L25.1,716.4 L9.6,742.9"/><path d="M9.6,742.3 L35.5,725.1"/><path d="M28.7,730.6 C30.7,730.6 37.3,729.2 41.0,730.6 C44.6,731.9 49.4,736.3 50.5,738.8 C51.6,741.3 51.4,742.6 47.8,745.6 C44.1,748.5 31.9,754.7 28.7,756.5"/><path d="M58.7,760.6 L79.2,774.2"/><path d="M79.2,774.2 C79.9,773.1 83.3,769.9 83.3,767.4 C83.3,764.9 81.7,761.3 79.2,759.2 C76.7,757.2 72.1,755.1 68.3,755.1 C64.4,755.1 59.2,757.0 56.0,759.2 C52.8,761.5 49.8,765.6 49.1,768.8 C48.5,772.0 48.7,776.5 51.9,778.3 C55.1,780.2 65.5,779.5 68.3,779.7"/><path d="M49.7,778.3 C48.2,779.0 42.0,781.2 41.0,782.4 C39.9,783.7 42.0,785.3 43.7,785.7 C45.4,786.2 50.1,785.3 51.3,785.2"/><path d="M117.4,769.6 C112.8,772.7 96.0,783.5 90.1,787.9 C84.2,792.3 82.4,793.7 81.9,796.1 C81.4,798.5 86.5,801.3 87.4,802.4"/><path d="M98.8,774.2 L111.9,783.8"/><path d="M97.7,810.3 L124.2,793.4"/><path d="M114.7,798.8 C116.7,798.8 123.3,798.0 126.9,798.8 C130.6,799.6 134.9,802.7 136.5,803.5"/><path d="M145.5,810.3 L165.2,824.8 L119.6,828.0 L139.2,842.5"/><path d="M144.7,852.1 L174.7,833.5"/><path d="M166.5,838.4 C168.8,838.4 176.1,837.0 180.2,838.4 C184.3,839.8 190.0,843.9 191.1,846.6 C192.2,849.3 190.9,851.6 187.0,854.8 C183.1,858.0 171.1,863.9 167.9,865.7"/><path d="M210.2,860.2 L195.2,884.8"/><path d="M230.7,875.8 C224.8,877.3 204.5,882.6 195.2,884.8 C185.9,887.0 179.0,888.8 174.7,888.9 C170.4,889.0 170.2,885.9 169.3,885.4"/><path d="M0.0,794.7 L12.3,791.4 L0.0,800.7"/><path d="M34.1,808.4 L53.2,823.4 L30.0,827.5"/><path d="M30.0,827.5 C30.9,828.8 35.5,832.9 35.5,835.7 C35.5,838.4 33.2,842.0 30.0,843.9 C26.8,845.7 21.4,847.5 16.4,846.6 C11.4,845.7 2.7,839.8 0.0,838.4"/><path d="M59.1,884.5 L98.9,858.7 L85.4,902.7 L122.8,877.6"/><path d="M136.9,887.4 L97.5,913.7 L118.9,930.7"/><path d="M126.9,936.6 L190.8,929.3"/><path d="M166.8,910.5 L151.0,956.0"/><path d="M0.0,913.0 L19.7,900.5 L5.1,945.3 L43.8,919.2"/><path d="M83.2,960.4 L99.9,961.4 L77.3,976.4"/></g>
<path d="M440,930 L448,924 M440,938 L444,935" stroke="#18e818" stroke-width="1"/>
<path d="M153,418 L161,414 M307,538 L324,512" stroke="#20e060" stroke-width="1" stroke-dasharray="1 2"/>
<g fill="none" stroke="#f6f6f6" stroke-width="1"><path d="M64.9,902.4 L73.7,895.9 L82.4,902.4 L73.7,909.0 L64.9,902.4"/><path d="M73.7,902.4 L73.7,841.5"/><path d="M69.3,848.0 L73.7,841.5 L78.8,848.0"/><path d="M66.4,841.5 L81.7,841.5"/><path d="M80.2,898.4 L137.9,859.7"/><path d="M127.7,859.7 L137.9,859.7 L134.2,868.5"/><path d="M140.1,844.4 L147.4,851.7 L154.7,844.4"/><path d="M147.4,851.7 L147.4,861.9"/><path d="M79.5,906.4 L133.5,947.5"/><path d="M123.3,947.5 L133.5,947.5 L130.3,938.5"/><path d="M135.4,947.2 L150.0,964.0"/><path d="M150.0,947.2 L135.4,964.0"/><path d="M66.900,824 H80.500 L66.900,841 H81.900"/></g>
<g shape-rendering="auto">
<path d="M1771.76,258.15 A74.3,74.3 0 0 1 1824.04,258.15 L1813.13,287.17 A43.3,43.3 0 0 0 1782.67,287.17 Z" fill="#dcbea0" stroke="#c9a47e" stroke-width=".8"/>
<path d="M1828.59,260.04 A74.3,74.3 0 0 1 1865.56,297.01 L1837.33,309.81 A43.3,43.3 0 0 0 1815.79,288.27 Z" fill="#dcbea0" stroke="#c9a47e" stroke-width=".8"/>
<path d="M1867.45,301.56 A74.3,74.3 0 0 1 1867.45,353.84 L1838.43,342.93 A43.3,43.3 0 0 0 1838.43,312.47 Z" fill="#dcbea0" stroke="#c9a47e" stroke-width=".8"/>
<path d="M1865.56,358.39 A74.3,74.3 0 0 1 1828.59,395.36 L1815.79,367.13 A43.3,43.3 0 0 0 1837.33,345.59 Z" fill="#dcbea0" stroke="#c9a47e" stroke-width=".8"/>
<path d="M1824.04,397.25 A74.3,74.3 0 0 1 1771.76,397.25 L1782.67,368.23 A43.3,43.3 0 0 0 1813.13,368.23 Z" fill="#dcbea0" stroke="#c9a47e" stroke-width=".8"/>
<path d="M1767.21,395.36 A74.3,74.3 0 0 1 1730.24,358.39 L1758.47,345.59 A43.3,43.3 0 0 0 1780.01,367.13 Z" fill="#dcbea0" stroke="#c9a47e" stroke-width=".8"/>
<path d="M1728.35,353.84 A74.3,74.3 0 0 1 1728.35,301.56 L1757.37,312.47 A43.3,43.3 0 0 0 1757.37,342.93 Z" fill="#dcbea0" stroke="#c9a47e" stroke-width=".8"/>
<path d="M1730.24,297.01 A74.3,74.3 0 0 1 1767.21,260.04 L1780.01,288.27 A43.3,43.3 0 0 0 1758.47,309.81 Z" fill="#dcbea0" stroke="#c9a47e" stroke-width=".8"/>
<path d="M1757.94,325.89 A40,40 0 0 1 1837.86,325.89 L1824.77,326.48 A26.9,26.9 0 0 0 1771.03,326.48 Z" fill="#dcbea0" stroke="#c9a47e" stroke-width=".8"/>
<path d="M1837.86,329.51 A40,40 0 0 1 1757.94,329.51 L1771.03,328.92 A26.9,26.9 0 0 0 1824.77,328.92 Z" fill="#dcbea0" stroke="#c9a47e" stroke-width=".8"/>
<rect x="1883.5" y="253.5" width="25" height="25" fill="#d9b99a" stroke="#c4b4a6" stroke-width="1"/>
<rect x="1883.5" y="284.5" width="25" height="25" fill="#d9b99a" stroke="#c4b4a6" stroke-width="1"/>
<rect x="1883.5" y="315.5" width="25" height="25" fill="#fbe0c6" stroke="#c4b4a6" stroke-width="1"/>
<rect x="1883.5" y="346.5" width="25" height="25" fill="#d9b99a" stroke="#c4b4a6" stroke-width="1"/>
<rect x="1883.5" y="377.5" width="25" height="25" fill="#d9b99a" stroke="#c4b4a6" stroke-width="1"/>
<path d="M1888.5,266.5 L1896,259.5 L1903.5,266.5 M1890.5,265 V272.5 H1901.5 V265" fill="#9aa8b8" stroke="#222" stroke-width="1.2"/>
<path d="M1889.5,293.5 A7.5,7.5 0 1 0 1896,290" fill="none" stroke="#7eb4dc" stroke-width="1.1"/><path d="M1892.5,288.2 L1888.6,292 L1893.8,293" fill="none" stroke="#2c8fd6" stroke-width="1.4"/>
<path d="M1902.5,355.5 A7.5,7.5 0 1 1 1896,352" fill="none" stroke="#7eb4dc" stroke-width="1.1"/><path d="M1899.5,350.2 L1903.4,354 L1898.2,355" fill="none" stroke="#2c8fd6" stroke-width="1.4"/>
<g transform="translate(1896,390)" fill="#2a2a2a"><circle r="5.6"/><rect x="-1.9" y="-8" width="3.8" height="4" transform="rotate(0)"/><rect x="-1.9" y="-8" width="3.8" height="4" transform="rotate(45)"/><rect x="-1.9" y="-8" width="3.8" height="4" transform="rotate(90)"/><rect x="-1.9" y="-8" width="3.8" height="4" transform="rotate(135)"/><rect x="-1.9" y="-8" width="3.8" height="4" transform="rotate(180)"/><rect x="-1.9" y="-8" width="3.8" height="4" transform="rotate(225)"/><rect x="-1.9" y="-8" width="3.8" height="4" transform="rotate(270)"/><rect x="-1.9" y="-8" width="3.8" height="4" transform="rotate(315)"/><circle r="2.4" fill="#d9b99a"/></g>
<text x="1896" y="334.3" font-family="Liberation Sans, sans-serif" font-size="14.5" fill="#222" text-anchor="middle">10</text>
</g>
</svg>
<div class="a" style="left:0;top:0;width:1919px;height:65px;background:#202124"></div>
<div class="a" style="left:0;top:65px;width:1919px;height:119px;background:#35363a"></div>
<div class="a" style="left:0;top:184px;width:1919px;height:31px;background:#35363a"></div>
<div class="a" style="left:0;top:183px;width:1919px;height:1px;background:#232427"></div>
<div class="a" style="left:0;top:215px;width:1919px;height:29px;background:#202124;border-top:2px solid #0e0f11;border-bottom:2px solid #0e0f11;box-sizing:border-box"></div>
<div class="a" style="left:0;top:217px;width:560px;height:26px;background:#35363a"></div>
<div class="a" style="left:278px;top:217px;width:2px;height:25px;background:#111214"></div>
<div class="a" style="left:0;top:977px;width:1919px;height:49px;background:#303135"></div>
<div class="a" style="left:46px;top:2px;width:228px;height:23px;background:#141518;border:1px solid #3a3b40;box-sizing:border-box"></div>
<span class="t" style="left:50.0px;top:8.0px;font-size:15.4px;color:#f0f0f0;letter-spacing:0.005px;">Drafting and Annotation</span>
<div class="a" style="left:261px;top:13px;border-left:4px solid transparent;border-right:4px solid transparent;border-top:4px solid #e0e0e0"></div>
<span class="t" style="left:897.0px;top:11.9px;font-size:16.6px;color:#e8e8e8;letter-spacing:-0.021px;">FLUID DESK BIM 2024</span>
<div class="a" style="left:956px;top:40px;width:136px;height:25px;background:#35363a"></div>
<span class="t" style="left:56.0px;top:45.3px;font-size:15px;color:#dadada;letter-spacing:0.121px;">Home</span>
<span class="t" style="left:121.0px;top:45.3px;font-size:15px;color:#dadada;letter-spacing:-0.169px;">Insert</span>
<span class="t" style="left:182.5px;top:45.3px;font-size:15px;color:#dadada;letter-spacing:0.117px;">Annotate</span>
<span class="t" style="left:268.0px;top:45.3px;font-size:15px;color:#dadada;letter-spacing:-0.441px;">Sheet</span>
<span class="t" style="left:330.0px;top:45.3px;font-size:15px;color:#dadada;letter-spacing:-0.086px;">Manage</span>
<span class="t" style="left:408.0px;top:45.3px;font-size:15px;color:#dadada;letter-spacing:-0.125px;">Constraints</span>
<span class="t" style="left:507.0px;top:45.3px;font-size:15px;color:#dadada;letter-spacing:-0.137px;">View</span>
<span class="t" style="left:563.7px;top:45.3px;font-size:15px;color:#dadada;letter-spacing:-0.557px;">BIM</span>
<span class="t" style="left:613.7px;top:45.3px;font-size:15px;color:#dadada;letter-spacing:-0.192px;">XtraTools</span>
<span class="t" style="left:699.0px;top:45.3px;font-size:15px;color:#dadada;letter-spacing:-0.402px;">Sanipack</span>
<span class="t" style="left:782.3px;top:45.3px;font-size:15px;color:#dadada;letter-spacing:-0.576px;">FLM 6.0</span>
<span class="t" style="left:858.3px;top:45.3px;font-size:15px;color:#dadada;letter-spacing:-0.228px;">Ventpack 6.0</span>
<span class="t" style="left:967.7px;top:45.3px;font-size:15px;color:#dadada;letter-spacing:-0.163px;">Hydronicpack 6.0</span>
<span class="t" style="left:1106.0px;top:45.3px;font-size:15px;color:#dadada;letter-spacing:-0.272px;">Plugins</span>
<span class="t" style="left:1731.0px;top:44.3px;font-size:15px;color:#dadada;letter-spacing:-0.033px;">Menu</span>
<div class="a" style="left:6px;top:160px;width:255px;height:1px;background:#47484c"></div>
<div class="a" style="left:264px;top:67px;width:1px;height:114px;background:#1e1f22"></div>
<div class="a" style="left:268px;top:160px;width:180px;height:1px;background:#47484c"></div>
<div class="a" style="left:1300px;top:160px;width:176px;height:1px;background:#47484c"></div>
<div class="a" style="left:1479px;top:67px;width:1px;height:114px;background:#1e1f22"></div>
<div class="a" style="left:593px;top:67px;width:1px;height:114px;background:#1e1f22"></div>
<div class="a" style="left:796px;top:67px;width:1px;height:114px;background:#1e1f22"></div>
<div class="a" style="left:980.5px;top:67px;width:1px;height:114px;background:#1e1f22"></div>
<div class="a" style="left:1247px;top:67px;width:1px;height:114px;background:#1e1f22"></div>
<span class="t" style="left:72.2px;top:164.3px;font-size:15px;color:#dadada;letter-spacing:-0.083px;">Projektuj instalację</span>
<span class="t" style="left:399.5px;top:164.3px;font-size:15px;color:#dadada;letter-spacing:-0.406px;">Eleme</span>
<span class="t" style="left:1332.0px;top:164.3px;font-size:15px;color:#dadada;letter-spacing:-0.281px;">Narzędzia</span>
<span class="t" style="left:12.6px;top:118.3px;font-size:15px;color:#dadada;letter-spacing:-0.065px;">Jednorurową</span>
<span class="t" style="left:112.4px;top:118.3px;font-size:15px;color:#dadada;letter-spacing:-0.014px;">Wielorurową</span>
<span class="t" style="left:209.4px;top:118.3px;font-size:15px;color:#dadada;letter-spacing:-0.767px;">Bypass</span>
<span class="t" style="left:275.5px;top:118.3px;font-size:15px;color:#dadada;letter-spacing:-0.287px;">Urządzenia</span>
<span class="t" style="left:276.5px;top:138.3px;font-size:15px;color:#dadada;letter-spacing:0.011px;">chłodnicze</span>
<span class="t" style="left:362.5px;top:118.3px;font-size:15px;color:#dadada;letter-spacing:-0.287px;">Urządzenia</span>
<span class="t" style="left:368.5px;top:138.3px;font-size:15px;color:#dadada;letter-spacing:-0.295px;">grzewcze</span>
<span class="t" style="left:1301.0px;top:118.3px;font-size:15px;color:#dadada;letter-spacing:-0.405px;">Obliczenia</span>
<span class="t" style="left:1296.0px;top:138.3px;font-size:15px;color:#dadada;letter-spacing:-0.477px;">hydrauliczne</span>
<span class="t" style="left:1388.5px;top:118.3px;font-size:15px;color:#dadada;letter-spacing:-0.352px;">Specyfikacja</span>
<span class="t" style="left:68.8px;top:223.3px;font-size:15px;color:#dadada;letter-spacing:-0.273px;">NONAME_0.dwg*</span>
<span class="t" style="left:297.0px;top:223.3px;font-size:15px;color:#dadada;letter-spacing:0.096px;">heating and coo...n v</span>
<svg style="left:245px;top:222px" width="16" height="16"><path d="M0.5 0.5L15.5 15.5M15.5 0.5L0.5 15.5" stroke="#e6e6e6" stroke-width="1.3" fill="none"/></svg>
<svg style="left:0;top:977px" width="200" height="21"><polygon points="0,0 74,0 67,20 5,20" fill="#55565b"/><path d="M74,0 L82,20" stroke="#d0d0d0" stroke-width="1"/><path d="M156,0 L149,20" stroke="#d0d0d0" stroke-width="1"/><path d="M0,0 L5,20" stroke="#d0d0d0" stroke-width="1"/><rect x="166" y="0.5" width="21" height="18" fill="#232428" stroke="#55565b"/><path d="M170.5 9.5h12M176.5 3.5v12" stroke="#e0e0e0" stroke-width="1.6"/></svg>
<span class="t" style="left:15.0px;top:980.0px;font-size:15px;color:#f0f0f0;letter-spacing:0.331px;font-weight:700;">Model</span>
<span class="t" style="left:94.3px;top:980.0px;font-size:15px;color:#dadada;letter-spacing:-0.308px;">Sheet2</span>
<span class="t" style="left:1.0px;top:1005.9px;font-size:14.6px;color:#dadada;letter-spacing:-0.395px;">FLUID DESK BIM 2024 x64</span>
<div class="a" style="left:405px;top:1001px;width:47px;height:25px;background:#1f2023;border:1px solid #3d3e43;border-bottom:none;box-sizing:border-box"></div>
<span class="t" style="left:412.5px;top:1005.9px;font-size:14.6px;color:#dadada;letter-spacing:-0.523px;">Snap</span>
<div class="a" style="left:460px;top:1001px;width:42px;height:25px;background:#2a2b2f;border:1px solid #3d3e43;border-bottom:none;box-sizing:border-box"></div>
<span class="t" style="left:467.5px;top:1005.9px;font-size:14.6px;color:#dadada;letter-spacing:-0.145px;">Grid</span>
<div class="a" style="left:510.4px;top:1001px;width:52.89999999999998px;height:25px;background:#1f2023;border:1px solid #3d3e43;border-bottom:none;box-sizing:border-box"></div>
<span class="t" style="left:517.9px;top:1005.9px;font-size:14.6px;color:#dadada;letter-spacing:0.280px;">Ortho</span>
<div class="a" style="left:572px;top:1001px;width:48px;height:25px;background:#2a2b2f;border:1px solid #3d3e43;border-bottom:none;box-sizing:border-box"></div>
<span class="t" style="left:579.5px;top:1005.9px;font-size:14.6px;color:#dadada;letter-spacing:-0.216px;">Polar</span>
<div class="a" style="left:628px;top:1001px;width:55.5px;height:25px;background:#2a2b2f;border:1px solid #3d3e43;border-bottom:none;box-sizing:border-box"></div>
<span class="t" style="left:635.5px;top:1005.9px;font-size:14.6px;color:#dadada;letter-spacing:-0.666px;">ESnap</span>
<div class="a" style="left:691.5px;top:1001px;width:56.10000000000002px;height:25px;background:#1f2023;border:1px solid #3d3e43;border-bottom:none;box-sizing:border-box"></div>
<span class="t" style="left:699.0px;top:1005.9px;font-size:14.6px;color:#dadada;letter-spacing:-0.765px;">ETrack</span>
<div class="a" style="left:755px;top:1001px;width:60.799999999999955px;height:25px;background:#2a2b2f;border:1px solid #3d3e43;border-bottom:none;box-sizing:border-box"></div>
<span class="t" style="left:762.5px;top:1005.9px;font-size:14.6px;color:#dadada;letter-spacing:0.331px;">QInput</span>
<div class="a" style="left:823.5px;top:1001px;width:127.5px;height:25px;background:#1f2023;border:1px solid #3d3e43;border-bottom:none;box-sizing:border-box"></div>
<span class="t" style="left:831.0px;top:1005.9px;font-size:14.6px;color:#dadada;letter-spacing:0.032px;">Cycling Selection</span>
<div class="a" style="left:959.5px;top:1001px;width:67.5px;height:25px;background:#2a2b2f;border:1px solid #3d3e43;border-bottom:none;box-sizing:border-box"></div>
<span class="t" style="left:967.0px;top:1005.9px;font-size:14.6px;color:#dadada;letter-spacing:0.042px;">LWeight</span>
<div class="a" style="left:1035.5px;top:1001px;width:64.5px;height:25px;background:#1f2023;border:1px solid #3d3e43;border-bottom:none;box-sizing:border-box"></div>
<span class="t" style="left:1043.0px;top:1005.9px;font-size:14.6px;color:#dadada;letter-spacing:-0.481px;">MODEL</span>
<div class="a" style="left:1107.5px;top:1001px;width:102.5px;height:25px;background:#1f2023;border:1px solid #3d3e43;border-bottom:none;box-sizing:border-box"></div>
<span class="t" style="left:1115.0px;top:1005.9px;font-size:14.6px;color:#dadada;letter-spacing:-0.376px;">Dynamic CCS</span>
<div class="a" style="left:1217.5px;top:1001px;width:77.5px;height:25px;background:#2a2b2f;border:1px solid #3d3e43;border-bottom:none;box-sizing:border-box"></div>
<span class="t" style="left:1225.0px;top:1005.9px;font-size:14.6px;color:#dadada;letter-spacing:0.512px;">AMonitor</span>
<div class="a" style="left:1304px;top:1000px;width:114px;height:26px;background:#1f2023;border:1px solid #4a4b50;border-bottom:none;box-sizing:border-box"></div>
<span class="t" style="left:1308.3px;top:1005.9px;font-size:14.6px;color:#dadada;letter-spacing:0.360px;">Annotation</span>
<div class="a" style="left:1401.5px;top:1010px;border-left:4.5px solid transparent;border-right:4.5px solid transparent;border-top:5px solid #e0e0e0"></div>
<span class="t" style="left:1425.7px;top:1005.9px;font-size:14.6px;color:#dadada;letter-spacing:0.365px;">(1/8&quot; = 1&#x27;-0&quot;)</span>
<span class="t" style="left:1521.7px;top:1005.9px;font-size:14.6px;color:#dadada;letter-spacing:-0.187px;">(446982.2605,82183.3665,0.0000)</span>
<svg style="left:0;top:0" width="1919" height="216" viewBox="0 0 1919 216">
<defs>
<linearGradient id="iOr" x1="0" y1="0" x2="1" y2="0"><stop offset="0" stop-color="#f59a3a"/><stop offset=".5" stop-color="#ea7808"/><stop offset="1" stop-color="#e06c00"/></linearGradient>
<linearGradient id="iRd" x1="0" y1="0" x2="1" y2="0"><stop offset="0" stop-color="#f04848"/><stop offset=".6" stop-color="#d01818"/><stop offset="1" stop-color="#a80808"/></linearGradient>
<linearGradient id="iBl" x1="0" y1="0" x2="1" y2="0"><stop offset="0" stop-color="#5a90c8"/><stop offset="1" stop-color="#38689c"/></linearGradient>
<linearGradient id="iBR" x1="0" y1="0" x2="0" y2="1"><stop offset="0" stop-color="#6aa6e0"/><stop offset=".45" stop-color="#b8a0c8"/><stop offset="1" stop-color="#f01010"/></linearGradient>
<linearGradient id="iBody" x1="0" y1="0" x2="1" y2="0"><stop offset="0" stop-color="#4678b0"/><stop offset="1" stop-color="#6a9ed4"/></linearGradient>
<g id="icJ"><rect x="0" y="16" width="31" height="6" fill="url(#iOr)"/><rect x="11.3" y="0" width="6.1" height="17" fill="url(#iOr)"/><rect x="11.3" y="0" width="19.8" height="6.1" fill="url(#iOr)"/><rect x="0" y="18.3" width="31" height="1.2" fill="#ffb060" opacity=".6"/><rect x="13.6" y="2.4" width="1.2" height="15" fill="#ffb060" opacity=".6"/><rect x="13.6" y="2.4" width="17.5" height="1.2" fill="#ffb060" opacity=".6"/></g>
<g id="icW"><rect x="0" y="24.6" width="30.8" height="6.4" fill="url(#iBl)"/><rect x="11.1" y="8.8" width="5.8" height="17" fill="url(#iBl)"/><rect x="11.1" y="8.8" width="19.7" height="5.8" fill="url(#iBl)"/><rect x="0" y="27.2" width="30.8" height="1.2" fill="#8cb8e4" opacity=".7"/><rect x="13.4" y="11" width="17.4" height="1.2" fill="#8cb8e4" opacity=".7"/>
<rect x="3.5" y="0" width="27.3" height="6.5" fill="url(#iRd)"/><rect x="3.5" y="0" width="6.3" height="17" fill="url(#iRd)"/><rect x="0" y="16.3" width="30.8" height="5.9" fill="url(#iRd)"/><rect x="6" y="2.6" width="24.8" height="1.2" fill="#ff8080" opacity=".7"/><rect x="0" y="18.6" width="30.8" height="1.2" fill="#ff8080" opacity=".7"/></g>
<g id="icB"><rect x="0" y="0" width="31" height="6" fill="#5c9ada"/><rect x="0" y="2.4" width="31" height="1.2" fill="#a8ccf0" opacity=".8"/><rect x="11.7" y="6" width="6" height="12.3" fill="url(#iBR)"/><rect x="14" y="6" width="1.3" height="12.3" fill="#fff" opacity=".35"/><rect x="0" y="18.3" width="31" height="5.5" fill="#f00808"/><rect x="0" y="20.2" width="31" height="1.2" fill="#ff5050" opacity=".7"/></g>
<g id="icC"><rect x="0" y="4.6" width="30.5" height="26.3" fill="#000"/><rect x="2.2" y="0" width="7.6" height="6" fill="#000"/><rect x="11.5" y="0" width="7.6" height="6" fill="#000"/><rect x="20.8" y="0" width="7.6" height="6" fill="#000"/><rect x="4" y="1.8" width="4" height="2.8" fill="#5c94cc"/><rect x="13.3" y="1.8" width="4" height="2.8" fill="#5c94cc"/><rect x="22.6" y="1.8" width="4" height="2.8" fill="#5c94cc"/>
<rect x="1.9" y="6.6" width="26.7" height="13.6" fill="#5a92cc"/><polygon points="2.6,6.6 15.2,6.6 8.9,20.2" fill="#16283c"/><polygon points="15.2,6.6 27.9,6.6 21.6,20.2" fill="#16283c"/><polygon points="1.9,6.6 2.6,6.6 8.9,20.2 1.9,20.2" fill="#5a92cc"/>
<rect x="1.9" y="22.3" width="26.7" height="6.6" fill="#34363a"/><polygon points="11,22.3 19.5,22.3 16.3,25.6 19.5,28.9 11,28.9 14.2,25.6" fill="#000"/></g>
<g id="icH"><rect x="8" y="0" width="6" height="5" rx="1.5" fill="#000"/><path d="M7,19 h-3.5 a3,3 0 0 0 -3,3 v4 a3,3 0 0 0 3,3 h3.5z" fill="#000"/><path d="M6.6,21 h-2.4 a2,2 0 0 0 -2,2.4 q2.5,0.5 2.6,3.6 h1.8z" fill="#5a92cc"/><rect x="6" y="4.5" width="14" height="26" fill="#000"/><rect x="7.9" y="6.4" width="10.2" height="22.2" fill="url(#iBody)"/>
<rect x="20" y="9.2" width="3.6" height="4.2" fill="#000"/><rect x="20" y="21.7" width="3.6" height="4.2" fill="#000"/><rect x="23" y="6.2" width="1.6" height="10" fill="#000"/><rect x="23" y="18.8" width="1.6" height="10" fill="#000"/><rect x="20.6" y="10.2" width="2" height="2.2" fill="#5a92cc"/><rect x="20.6" y="22.7" width="2" height="2.2" fill="#5a92cc"/>
<path d="M26,11.3 h3.5 M28,9.3 l2.4,2 l-2.4,2z" stroke="#d01010" stroke-width="1.2" fill="#d01010"/><path d="M31,23.8 h-3.5 M29,21.8 l-2.4,2 l2.4,2z" stroke="#08a8e8" stroke-width="1.2" fill="#08a8e8"/></g>
</defs>
<use href="#icJ" transform="translate(40.6,82) scale(1)"/>
<use href="#icW" transform="translate(138.5,75.4) scale(1)"/>
<use href="#icB" transform="translate(215.3,79) scale(1)"/>
<use href="#icC" transform="translate(296.7,75.4) scale(1)"/>
<use href="#icH" transform="translate(384,75.4) scale(1)"/>
<rect x="1330" y="75.7" width="18.6" height="4" fill="#3c6ea8"/><circle cx="1326" cy="77.7" r="2" fill="#3c6ea8"/>
<rect x="1420" y="75.5" width="23.5" height="4.4" fill="#00a2ea"/><circle cx="1414.6" cy="77.7" r="2.3" fill="#000"/>
<rect x="1330" y="84.6" width="18.6" height="4" fill="#3c6ea8"/><circle cx="1326" cy="86.6" r="2" fill="#3c6ea8"/>
<rect x="1420" y="84.39999999999999" width="23.5" height="4.4" fill="#00a2ea"/><circle cx="1414.6" cy="86.6" r="2.3" fill="#000"/>
<rect x="1330" y="93.6" width="18.6" height="4" fill="#3c6ea8"/><circle cx="1326" cy="95.6" r="2" fill="#3c6ea8"/>
<rect x="1420" y="93.39999999999999" width="23.5" height="4.4" fill="#00a2ea"/><circle cx="1414.6" cy="95.6" r="2.3" fill="#000"/>
<rect x="1330" y="102.5" width="18.6" height="4" fill="#3c6ea8"/><circle cx="1326" cy="104.5" r="2" fill="#3c6ea8"/>
<rect x="1420" y="102.3" width="23.5" height="4.4" fill="#00a2ea"/><circle cx="1414.6" cy="104.5" r="2.3" fill="#000"/>
<path d="M1317.4,77.7h4M1319.4,75.7v4M1317.4,86.6h4M1317.4,95.6h4M1319.4,93.4v.9M1319.4,96.9v.9M1317.9,103 l3,3 M1320.9,103 l-3,3" stroke="#000" stroke-width="1.1" fill="none"/>
<text x="1330.6" y="100.7" font-family="Liberation Sans, sans-serif" font-weight="700" font-size="27.5" fill="#000">P</text>
<g stroke="#0560ac" stroke-width="3.3" fill="none" stroke-linejoin="miter" stroke-miterlimit="2"><path d="M15.6,20.4 L21,15.7 L26.3,20.4 L31.6,15.7"/><path d="M10.3,22.5 L15.6,27.2 L20.9,22.7 L26.1,27.2"/><path d="M15.6,34 L20.9,29.4 L26.3,34 L31.4,29.5"/></g>
<g stroke="#d8d8d8" stroke-width="1.4" fill="none"><path d="M282,7.5h8l3.5,3.5M282,7.5v13h7M290,7.5v3.5h3.5v4"/><path d="M291,19h5M293.500,16.5v5"/><path d="M308,21v-9.500h5l1.500,1.500h5.500v2M308,21l3,-6h13l-3.500,6z"/><path d="M318,10v-4.500M315.500,7.500l2.500,-2.500l2.500,2.500" /><path d="M335,21v-9.500h5l1.500,1.500h5.500v2M335,21l3,-6h13l-3.500,6z M338,14h5 M338,16.500h3"/><path d="M347,10v-4.500M344.500,7.500l2.500,-2.500l2.500,2.500" /></g>
<path d="M362.5,6.500h12l3,3v11h-15z" fill="#d8d8d8"/><rect x="366" y="6.500" width="7" height="4.500" fill="#202124"/><rect x="370.3" y="7.3" width="1.800" height="3" fill="#d8d8d8"/><rect x="365.500" y="14.500" width="9" height="6" fill="#202124"/>
<g stroke="#d8d8d8" stroke-width="1.3" fill="none"><rect x="390" y="11" width="12.500" height="6" rx="2"/><path d="M392.500,11v-2.500h7.500v2.500M392.500,15h7.500v4.500h-7.500z"/></g>
<g stroke="#8a8b90" stroke-width="1.7" fill="none"><path d="M419,10.500h5.500a3.800,3.800 0 0 1 0,7.600h-3.500"/><path d="M421.500,7.500l-3,3l3,3"/><path d="M464.500,10.500h-5.500a3.800,3.800 0 0 0 0,7.600h3.500"/><path d="M462,7.500l3,3l-3,3"/></g>
<path d="M437,13.500h6l-3,3z M474,13.500h6l-3,3z" fill="#c8c8c8"/>
<path d="M487.500,12.500h5.500v1.400h-5.500z M487.500,15h5.500l-2.750,3z" fill="#e0e0e0"/>
<g stroke="#fff" stroke-width="1.6" fill="none"><path d="M1844.600,16.800h6.800" stroke-width="2.200"/><rect x="1874" y="13.500" width="5.200" height="5.200"/><path d="M1876.200,13.500v-2.200h5v5h-2"/><path d="M1900.500,11l8,8M1908.500,11l-8,8" stroke-width="1.900"/></g>
<path d="M1776.500,50h7l-3.500,3.500z M1839.500,50h7l-3.500,3.500z" fill="#e0e0e0"/>
<path d="M1796.500,53.500l4,-4l4,4" stroke="#c0c0c0" stroke-width="2.600" fill="none"/>
<text x="1822" y="57.500" font-family="Liberation Sans, sans-serif" font-weight="700" font-size="14" fill="#e8e8e8">?</text>
<g stroke="#e0e0e0" stroke-width="1.300" fill="none"><path d="M1857.500,54.400h7.500" stroke-width="2.200"/><rect x="1880.500" y="49.500" width="5" height="5"/><path d="M1882.500,49.500v-2.200h5v5h-2"/><path d="M1902,47.500l7.500,7.500M1909.500,47.500l-7.500,7.500" stroke-width="1.500"/></g>
<g fill="#f0f0f0"><rect x="3" y="192" width="2" height="2"/><rect x="3" y="196" width="2" height="2"/><rect x="3" y="200" width="2" height="2"/><rect x="3" y="204" width="2" height="2"/><rect x="3" y="208" width="2" height="2"/></g>
<use href="#icJ" transform="translate(16,195) scale(0.52)"/>
<use href="#icB" transform="translate(43,194) scale(0.52)"/>
<use href="#icW" transform="translate(70,192) scale(0.52)"/>
<rect x="95" y="187" width="1" height="28" fill="#1e1f22"/><rect x="345" y="187" width="1" height="28" fill="#1e1f22"/><rect x="1394" y="187" width="1" height="28" fill="#1e1f22"/>
<use href="#icC" transform="translate(104,192) scale(0.52)"/>
<use href="#icH" transform="translate(131,192) scale(0.52)"/>
<rect x="160.500" y="197.500" width="9" height="10.500" rx="3" fill="#e01818" stroke="#000" stroke-width="1"/><path d="M160.500,203h9" stroke="#000" stroke-width="1"/><path d="M165,197v-3h4M166.500,193.500h3" stroke="#000" stroke-width="1.200" fill="none"/>
<rect x="189.500" y="192.500" width="6" height="4" fill="#5a92cc" stroke="#000" stroke-width="1"/><polygon points="185,198 189,202 185,206" fill="#000"/><polygon points="200.500,198 196.500,202 200.500,206" fill="#000"/><circle cx="192.700" cy="202" r="5.600" fill="#5a92cc" stroke="#000" stroke-width="1"/><polygon points="190,198 197,202 190,206" fill="#e01818"/>
<rect x="211.5" y="199" width="5" height="2.400" fill="#5a92cc"/><rect x="215.5" y="195.500" width="5.500" height="9.500" fill="#e01818"/><rect x="221.0" y="196.500" width="7" height="7.500" fill="#5a92cc"/>
<rect x="265.5" y="199" width="5" height="2.400" fill="#5a92cc"/><rect x="269.5" y="195.500" width="5.500" height="9.500" fill="#e01818"/><rect x="275.0" y="196.500" width="7" height="7.500" fill="#5a92cc"/>
<path d="M240,206.500h14" stroke="#5a92cc" stroke-width="2.500"/><path d="M243,195v5l4,-2.500z M251,195v5l-4,-2.500z" fill="#000"/><path d="M247,197.500q6,1 6,8" stroke="#e01818" stroke-width="1.500" fill="none"/>
<rect x="293" y="196" width="11" height="11" fill="#8c8c8c" stroke="#444" stroke-width="1"/><polygon points="293,196 297,192.500 308,192.500 304,196" fill="#b0b0b0"/><polygon points="304,196 308,192.500 308,203.500 304,207" fill="#6c6c6c"/><text x="295.500" y="205.500" font-family="Liberation Sans, sans-serif" font-size="9.500" font-weight="700" fill="#222">?</text><rect x="305" y="199" width="5" height="3" fill="#5a92cc"/>
<path d="M322.500,193.500h8l3,3v4h-11z" fill="#c8c8c8" stroke="#333" stroke-width="1"/><path d="M324.500,197.500h5M324.500,199.500h5" stroke="#444" stroke-width="1"/><path d="M324,203.500h7v-2.500l4.500,4l-4.500,4v-2.500h-7z" fill="#1c8cdc"/><path d="M321.500,198v9.500h5" stroke="#c8c8c8" stroke-width="1.300" fill="none"/>
<rect x="353.500" y="198" width="17" height="7" rx="2" fill="#1c8cdc"/><path d="M357.500,198v7M361,198v7M364.500,198v7M368,198v7" stroke="#0a4a88" stroke-width="1.100"/>
<path d="M381,201h16" stroke="#1c8cdc" stroke-width="2.500" stroke-dasharray="3 1.500"/><rect x="384" y="194" width="10" height="4" fill="#1c8cdc"/><path d="M381,204.500h7v3.500h8" stroke="#000" stroke-width="2.200" fill="none"/>
<path d="M408,201h16" stroke="#1c8cdc" stroke-width="2" stroke-dasharray="2 2"/><rect x="415" y="195" width="2.500" height="2.500" fill="#1c8cdc"/><path d="M408,204.500h7v3.500h8" stroke="#000" stroke-width="2.200" fill="none"/>
<g stroke="#1c9ce0" stroke-width="1.400" fill="none"><path d="M1315.500,197.500h10v10h-10z M1315.500,197.500l4,-4.500h10l-4,4.500 M1329.500,193v10l-4,4.500"/></g>
<path d="M1342.500,197.500h10v10h-10z" fill="#1c9ce0" stroke="#000" stroke-width="1.200"/><path d="M1342.500,197.500l4,-4.500h10l-4,4.500z" fill="#58c0f4" stroke="#000" stroke-width="1.200"/><path d="M1356.500,193v10l-4,4.500v-10z" fill="#0c6cb0" stroke="#000" stroke-width="1.200"/>
<defs><radialGradient id="iSph" cx=".4" cy=".35" r=".7"><stop offset="0" stop-color="#7ad4ff"/><stop offset=".6" stop-color="#1c9ce0"/><stop offset="1" stop-color="#0c6cb0"/></radialGradient></defs><circle cx="1377" cy="200.500" r="7.800" fill="url(#iSph)"/>
<circle cx="1411" cy="200.500" r="6" fill="url(#iSph)"/><path d="M1405.500,197.500q5,2.500 10,-1 M1413.500,195.500l3,9.500" stroke="#4a4a4e" stroke-width="1.200" fill="none"/><path d="M1406,202l4,-2.500l-1.500,4.500z" fill="#35363a"/>
</svg>
<div class="a" style="left:437px;top:78px;width:869px;height:811px;background:#f0f0f0;box-shadow:0 0 0 1px rgba(80,80,80,.55),0 4px 18px rgba(0,0,0,.45)"></div>
<div class="a" style="left:437px;top:78px;width:869px;height:37px;background:#fff"></div>
<span class="t" style="left:471.2px;top:89.3px;font-size:15px;color:#000;letter-spacing:-0.031px;">FLM - Modyfikacja elementu</span>
<svg style="left:1280px;top:89.7px" width="12" height="12"><path d="M0.5 0.5L11.5 11.5M11.5 0.5L0.5 11.5" stroke="#000" stroke-width="1.1" fill="none"/></svg>
<svg style="left:0;top:0" width="500" height="120"><g stroke="#000010" stroke-width="3.1" opacity=".8" fill="none" stroke-linejoin="miter" stroke-miterlimit="2"><path d="M450.3,91.5 L456.2,86.9 L461.5,92.5 L465.6,88.7"/><path d="M446.5,95 L451.2,99 L456.8,93.1 L461.8,98.1"/><path d="M450.9,104.4 L456.2,99.4 L460.9,105 L465.6,101.2"/></g><g stroke="#0000a0" stroke-width="1.9" fill="none" stroke-linejoin="miter" stroke-miterlimit="2"><path d="M450.3,91.5 L456.2,86.9 L461.5,92.5 L465.6,88.7"/><path d="M446.5,95 L451.2,99 L456.8,93.1 L461.8,98.1"/><path d="M450.9,104.4 L456.2,99.4 L460.9,105 L465.6,101.2"/></g></svg>
<span class="t" style="left:472.0px;top:134.5px;font-size:13.3px;color:#000;letter-spacing:0.415px;">Typ:</span>
<div class="a" style="left:505px;top:127px;width:296px;height:23px;background:#f0f0f0;box-sizing:border-box;border:1px solid;border-color:#a0a0a0 #fff #fff #a0a0a0"></div>
<span class="t" style="left:510.7px;top:132.4px;font-size:13.3px;color:#000;letter-spacing:-0.274px;">AB-QM 4.0</span>
<span class="t" style="left:455.0px;top:164.5px;font-size:13.3px;color:#000;letter-spacing:-0.091px;">Nazwa:</span>
<div class="a" style="left:505px;top:157px;width:296px;height:23px;background:#f0f0f0;box-sizing:border-box;border:1px solid;border-color:#a0a0a0 #fff #fff #a0a0a0"></div>
<span class="t" style="left:511.5px;top:162.2px;font-size:13.3px;color:#000;letter-spacing:0.041px;">Zawory regulacyjne niezależne od ciłnienia</span>
<span class="t" style="left:451.0px;top:194.7px;font-size:13.3px;color:#000;letter-spacing:-0.033px;">System:</span>
<div class="a" style="left:505px;top:187px;width:120px;height:24px;background:#fff;box-sizing:border-box;border:1px solid #7a7a7a"></div>
<svg style="left:609px;top:196.5px" width="10" height="6"><path d="M0.5 0.5L5 5L9.5 0.5" stroke="#444" stroke-width="1.1" fill="none"/></svg>
<span class="t" style="left:508.4px;top:191.5px;font-size:13.3px;color:#000;letter-spacing:-1.700px;">C1</span>
<div class="a" style="left:633px;top:187px;width:168px;height:23.5px;background:#f0f0f0;box-sizing:border-box;border:1px solid;border-color:#a0a0a0 #fff #fff #a0a0a0"></div>
<span class="t" style="left:639.0px;top:192.7px;font-size:13.3px;color:#000;letter-spacing:-0.060px;">Chłodzący wtórny</span>
<span class="t" style="left:456.3px;top:224.5px;font-size:13.3px;color:#000;letter-spacing:-0.182px;">Numer:</span>
<div class="a" style="left:505px;top:217.5px;width:60px;height:23.0px;background:#f0f0f0;box-sizing:border-box;border:1px solid;border-color:#a0a0a0 #fff #fff #a0a0a0"></div>
<span class="t" style="left:591.2px;top:224.4px;font-size:13.3px;color:#000;letter-spacing:-0.055px;">Poziom [m]:</span>
<div class="a" style="left:667px;top:217px;width:60px;height:24px;background:#e1e1e1;box-sizing:border-box;border:1px solid #adadad"></div>
<svg style="left:711px;top:226.5px" width="10" height="6"><path d="M0.5 0.5L5 5L9.5 0.5" stroke="#444" stroke-width="1.1" fill="none"/></svg>
<span class="t" style="left:671.0px;top:222.2px;font-size:13.3px;color:#000;letter-spacing:0.023px;">OR</span>
<div class="a" style="left:729px;top:217px;width:72px;height:24px;background:#fff;box-sizing:border-box;border:1px solid #7a7a7a"></div>
<span class="t" style="left:767.7px;top:222.2px;font-size:13.3px;color:#000;letter-spacing:-0.616px;">3.023</span>
<div class="a" style="left:447.5px;top:252px;width:351.5px;height:326.5px;box-sizing:border-box;border:1px solid;border-color:#cfcfcf #fff #fff #cfcfcf;background:#f0f0f0"></div>
<div class="a" style="left:450px;top:254px;width:347px;height:321px;box-sizing:border-box;border:2px solid;border-color:#696969 #e3e3e3 #e3e3e3 #696969;background:#000"></div>
<svg style="left:452px;top:256px" width="344" height="317" viewBox="452 256 344 317" shape-rendering="crispEdges"><g fill="none" stroke="#00f400" stroke-width="1">
<path d="M560.3,297.4 L561.8,289.6 L572.8,281.8 L586.8,275.6 L602.4,274.4 L624.2,276.4 L649.2,287.3 L731.9,345"/>
<path d="M731.9,345 L724,356.7 L705.4,369.2 L680.4,378.6 L664.8,381.7 L563.4,311.5 L560.3,297.4"/>
<path d="M733,348 L725,359 L706,371.4 L681,380.8 L665,383.9 L672,384"/>
<path d="M664,380.5 L562,310"/>
<path d="M562.5,299 L564,292 L574,284 L587.5,277.8 L602.4,276.6 L623.5,278.6 L648,289.3"/>
<path d="M558.7,331.8 L563,338 L664.8,400.4 L672.6,401.2 L690.8,395.8 L721.5,377.4 L733.5,364.5"/>
<path d="M558.7,297.4 L558.7,360 L560.8,419.4"/>
<path d="M560.3,297.4 L560.3,331"/>
<path d="M563,338 L566,360 L573.1,401 L580.3,403 L665.2,450 L671.4,451 L705.1,439.8 L721.5,425.5 L732.8,411.2 L733.8,360 L732,345"/>
<path d="M664.5,381.7 L665.2,450"/>
<path d="M671.6,384 L671.4,451"/>
<path d="M721.5,377.4 L721.5,407"/>
<path d="M733.5,363 L735,362 L733.8,366"/>
<path d="M690.8,395.8 L691.8,423.4 L715.4,411.2 L720.5,384.6"/>
<path d="M693,399 L715.4,409 L709,388"/>
<path d="M693,421 L700,414 L715.4,409"/>
<path d="M715.4,409 L744,446"/>
<path d="M721.5,405 L749.5,439.8"/>
<ellipse cx="746.8" cy="443" rx="3.6" ry="2.2" transform="rotate(-50 746.8 443)" />
<ellipse cx="606.8" cy="300.2" rx="11.7" ry="6.5" transform="rotate(0 606.8 300.2)" />
<path d="M600,300 L602.5,296.5 L609,295.8 L613.5,299 L612,303.4 L605,304.6 Z"/>
<path d="M605.5,318.5 L638.3,299 L661.7,313 L627.4,332.5 Z"/>
<path d="M638.3,300.8 L659,313.2"/>
<ellipse cx="600.7" cy="441" rx="30.7" ry="12" transform="rotate(0 600.7 441)" />
<path d="M570,436 L572,449 L580,457 L600.7,462.3 L621,458 L631.4,448 L632.5,435"/>
<path d="M573,438 L575,448 L583,455 L600.7,459.5 L619,455.5 L628.5,447 L629.5,437"/>
<path d="M577,436 L586,441 L600,442.5 L618,440 L626,436"/>
<path d="M581,437 L586,442 L603,442 L622,437"/>
<rect x="611" y="438" width="5" height="5" fill="#00f400"/>
<path d="M572,449 L575,470 L583,478 L600.7,484 L620,480"/>
<path d="M575,470 L580,476 L600.7,479"/>
<path d="M577,471 L604,474 L603,470"/>
<path d="M570,466 L572,486 L566,498"/>
<path d="M583,478 L579,490 L568,499"/>
<path d="M597,492 L610,472 L631,453"/>
<path d="M597,492 L617,499 L632,494"/>
<path d="M600,486 L613,474 L618,470"/>
<ellipse cx="647.8" cy="480.7" rx="16.4" ry="26.6" transform="rotate(12 647.8 480.7)" />
<ellipse cx="647.8" cy="480.7" rx="14" ry="23.8" transform="rotate(12 647.8 480.7)" />
<ellipse cx="649" cy="481" rx="10.2" ry="16.4" transform="rotate(12 649 481)" />
<path d="M642,467 L653,465 L659,474 L656.5,492 L646,497.5 L639,490 Z"/>
<path d="M631.4,450 L640,452 L654,456.2"/>
<path d="M617,499 L632,505 L641,507"/>
<path d="M613,474 L617,490 L623,500"/>
<path d="M632,494 L634,505"/>
<path d="M556.7,507 A44,17 0 0 0 644.7,507"/>
<path d="M558.2,505 A42.5,17 0 0 0 643.2,505"/>
<path d="M555.2,512 A45.5,19 0 0 0 646.2,512"/>
<path d="M556.7,510 A44.0,19 0 0 0 644.7,510"/>
<path d="M554.7,517 A46,20.5 0 0 0 646.7,517"/>
<path d="M556.2,515 A44.5,20.5 0 0 0 645.2,515"/>
<path d="M554.7,522 A46,21.5 0 0 0 646.7,522"/>
<path d="M556.2,520 A44.5,21.5 0 0 0 645.2,520"/>
<path d="M555.2,527 A45.5,22 0 0 0 646.2,527"/>
<path d="M556.7,525 A44.0,22 0 0 0 644.7,525"/>
<path d="M556.2,532 A44.5,22.3 0 0 0 645.2,532"/>
<path d="M557.7,530 A43.0,22.3 0 0 0 643.7,530"/>
<path d="M554.7,499 L554.7,534"/>
<path d="M556.5,497 L556.5,531"/>
<path d="M646.8,509.4 L646.8,534"/>
<path d="M645,511 L645,531"/>
<path d="M560,500 Q575,512 600.7,514 Q628,512 640,503"/>
<path d="M563,494 Q580,505 600.7,507 Q625,505 636,499"/>
<path d="M566,489 Q580,498 600.7,500 Q620,499 630,496"/>
<ellipse cx="547.5" cy="374.3" rx="12.3" ry="7.2" transform="rotate(-25 547.5 374.3)" />
<ellipse cx="547.5" cy="376.8" rx="12.3" ry="7.2" transform="rotate(-25 547.5 376.8)" />
<ellipse cx="547" cy="372" rx="9.5" ry="5.5" transform="rotate(-25 547 372)" />
<path d="M540,376 l3,-5 M543,377 l3,-6 M546,376.500 l3,-6 M549,375.500 l3,-6 M552,374 l3,-5 M539,372.500 l10,-3 M541,375.500 l12,-4" />
<ellipse cx="546" cy="385" rx="13" ry="6.5" transform="rotate(-25 546 385)" />
<path d="M534,389 L559,381"/>
<path d="M534,389 L540,394 L560,385"/>
<path d="M544,393 L558,420 L562,428"/>
<path d="M548,392 L563,419"/>
<ellipse cx="518.9" cy="408" rx="17" ry="9.5" transform="rotate(-28 518.9 408)" />
<ellipse cx="518.9" cy="411" rx="17" ry="9.5" transform="rotate(-28 518.9 411)" />
<ellipse cx="518" cy="405.5" rx="13" ry="7.3" transform="rotate(-28 518 405.5)" />
<path d="M508,411 l4,-8 M512,412 l4,-9 M516,411 l4,-9 M520,409.500 l4,-9 M524,407.500 l4,-8 M528,405 l3,-6 M507,407 l16,-6 M510,412 l18,-7"/>
<ellipse cx="517.5" cy="420" rx="17.5" ry="8" transform="rotate(-28 517.5 420)" />
<path d="M500,422 L504,427 L537,412 L536,407"/>
<path d="M514.8,425.5 L533,461 L547.5,484.8"/>
<path d="M539.4,411.2 L570,466.4"/>
<path d="M533.2,462.3 L540,464 L558,456 L566,447"/>
<path d="M535,465 L543,474 L560,468 L570,458"/>
<path d="M527,446 L524,462.3 L531.2,480.8 L547.5,484.8 L562,482 L570,478.7"/>
<path d="M527,446 L530,441 L534,447"/>
<path d="M547.5,484.8 L553,490 L566,488"/>
<path d="M553,490 L555,499"/>
</g>
<g fill="none" stroke="#f4e000" stroke-width="1">
<path d="M669.3,478.3 L695.9,489"/>
<path d="M702,491 L725.6,501.2"/>
<path d="M695.9,489 L665.2,511.5"/>
<path d="M639.6,501.2 L665.2,511.5"/>
<path d="M725.6,501.2 L686.7,501.2 L711.3,511.5"/>
<path d="M666.2,518.6 L678.5,510.4 L692.9,511.5 L700,517.6 L692.9,527.8 Z"/>
<path d="M695.900,489 l-6,2 l3,3z M665.200,511.500 l6,-2 l-3,-3z" fill="#f4e000"/>
</g></svg>
<div class="a" style="left:447.5px;top:579px;width:66px;height:23.5px;background:#fff;box-sizing:border-box;border:1px solid #dcdcdc;border-top:none"></div>
<div class="a" style="left:513px;top:580.5px;width:59.5px;height:20.5px;background:#f0f0f0;box-sizing:border-box;border:1px solid #d9d9d9;border-top:none"></div>
<span class="t" style="left:455.0px;top:585.7px;font-size:13.3px;color:#000;letter-spacing:0.067px;">3D Slajd</span>
<span class="t" style="left:518.0px;top:583.2px;font-size:13.3px;color:#000;letter-spacing:0.029px;">2D Slajd</span>
<svg style="left:447px;top:609.3px" width="16" height="16"><rect x="0.5" y="0.5" width="15" height="15" fill="#fff" stroke="#333"/><path d="M3.2 8L6.4 11.2L12.8 4" stroke="#222" stroke-width="1.3" fill="none"/></svg>
<span class="t" style="left:465.9px;top:610.6px;font-size:13.3px;color:#000;letter-spacing:0.237px;">Specyfikacja</span>
<span class="t" style="left:830.7px;top:134.4px;font-size:13.3px;color:#000;letter-spacing:-0.001px;">Producent:</span>
<div class="a" style="left:901px;top:127px;width:295px;height:23.5px;background:#f0f0f0;box-sizing:border-box;border:1px solid;border-color:#a0a0a0 #fff #fff #a0a0a0"></div>
<span class="t" style="left:906.7px;top:132.7px;font-size:13.3px;color:#000;letter-spacing:-0.105px;">DANFOSS_2023</span>
<span class="t" style="left:848.0px;top:164.4px;font-size:13.3px;color:#000;letter-spacing:-0.400px;">Str. Kat.:</span>
<div class="a" style="left:901px;top:157px;width:107.5px;height:23.5px;background:#f0f0f0;box-sizing:border-box;border:1px solid;border-color:#a0a0a0 #fff #fff #a0a0a0"></div>
<div class="a" style="left:1015.7px;top:158px;width:86.0px;height:24px;background:#cccccc;box-sizing:border-box;border:1px solid #bfbfbf"></div>
<span class="t" style="left:1038.3px;top:163.2px;font-size:13.3px;color:#838383;letter-spacing:-0.232px;">Cennik</span>
<div class="a" style="left:1109.7px;top:158px;width:86.0px;height:24px;background:#cccccc;box-sizing:border-box;border:1px solid #bfbfbf"></div>
<span class="t" style="left:1130.0px;top:163.2px;font-size:13.3px;color:#838383;letter-spacing:-0.016px;">Katalog</span>
<span class="t" style="left:854.3px;top:194.4px;font-size:13.3px;color:#000;letter-spacing:0.007px;">Uwagi:</span>
<div class="a" style="left:901px;top:187px;width:295px;height:24px;background:#fff;box-sizing:border-box;border:1px solid #7a7a7a"></div>
<svg style="left:1180px;top:196.5px" width="10" height="6"><path d="M0.5 0.5L5 5L9.5 0.5" stroke="#444" stroke-width="1.1" fill="none"/></svg>
<div class="a" style="left:812px;top:250px;width:433px;height:594px;box-sizing:border-box;border:1px solid;border-color:#fff #696969 #696969 #fff;background:#f0f0f0"></div>
<div class="a" style="left:813px;top:251px;width:431px;height:592px;box-sizing:border-box;border:1px solid;border-color:#f0f0f0 #a0a0a0 #a0a0a0 #f0f0f0"></div>
<div class="a" style="left:812px;top:227px;width:77px;height:25px;box-sizing:border-box;border:1px solid;border-color:#fff #696969 transparent #fff;border-bottom:none;background:#f0f0f0"></div>
<div class="a" style="left:889px;top:229px;width:59px;height:21px;box-sizing:border-box;border:1px solid;border-color:#fff #696969 transparent #fff;border-bottom:none;background:#f0f0f0"></div>
<div class="a" style="left:948px;top:229px;width:73px;height:21px;box-sizing:border-box;border:1px solid;border-color:#fff #696969 transparent #fff;border-bottom:none;background:#f0f0f0"></div>
<span class="t" style="left:819.0px;top:232.0px;font-size:13.3px;color:#000;letter-spacing:0.095px;">Parametry</span>
<span class="t" style="left:893.0px;top:230.9px;font-size:13.3px;color:#000;letter-spacing:0.027px;">Siłownik</span>
<span class="t" style="left:954.0px;top:230.9px;font-size:13.3px;color:#000;letter-spacing:0.078px;">Przepływy</span>
<span class="t" style="left:827.1px;top:276.5px;font-size:13.3px;color:#000;letter-spacing:0.017px;">Średnica nominalna DN:</span>
<div class="a" style="left:1025px;top:271px;width:120px;height:20px;background:#fff;box-sizing:border-box;border:1px solid #7a7a7a"></div>
<svg style="left:1129px;top:278.5px" width="10" height="6"><path d="M0.5 0.5L5 5L9.5 0.5" stroke="#444" stroke-width="1.1" fill="none"/></svg>
<span class="t" style="left:1028.5px;top:276.1px;font-size:12.5px;color:#000;letter-spacing:-0.453px;">15</span>
<span class="t" style="left:827.1px;top:306.1px;font-size:13.3px;color:#000;letter-spacing:-0.094px;">Przyłącze:</span>
<div class="a" style="left:1025px;top:301.5px;width:130px;height:19.5px;background:#fff;box-sizing:border-box;border:1px solid #7a7a7a"></div>
<svg style="left:1139px;top:308.75px" width="10" height="6"><path d="M0.5 0.5L5 5L9.5 0.5" stroke="#444" stroke-width="1.1" fill="none"/></svg>
<div class="a" style="left:1027px;top:303px;width:105px;height:16px;overflow:hidden"><span class="t" style="left:1px;top:1.5px;font-size:12.5px;color:#000;letter-spacing:-0.1px">Gwint zewnętrzny</span></div>
<svg style="left:827px;top:331.5px" width="16" height="16"><rect x="0.5" y="0.5" width="15" height="15" fill="#fff" stroke="#333"/><path d="M3.2 8L6.4 11.2L12.8 4" stroke="#222" stroke-width="1.3" fill="none"/></svg>
<span class="t" style="left:846.7px;top:332.7px;font-size:13.3px;color:#000;letter-spacing:0.016px;">Ze złączkami pomiarowymi</span>
<span class="t" style="left:827.1px;top:388.4px;font-size:13.3px;color:#000;letter-spacing:-0.070px;">Przepływ nom. (Qnom) [l/h]:</span>
<div class="a" style="left:1025px;top:383px;width:87.5px;height:23px;background:#f0f0f0;box-sizing:border-box;border:1px solid;border-color:#a0a0a0 #fff #fff #a0a0a0"></div>
<span class="t" style="left:1029.5px;top:388.8px;font-size:12.4px;color:#000;">650</span>
<span class="t" style="left:827.1px;top:418.4px;font-size:13.3px;color:#000;letter-spacing:-0.060px;">Przepływ maks. (Qmax) [m3/h]:</span>
<div class="a" style="left:1025px;top:413px;width:87.5px;height:23px;background:#f0f0f0;box-sizing:border-box;border:1px solid;border-color:#a0a0a0 #fff #fff #a0a0a0"></div>
<span class="t" style="left:1029.5px;top:418.8px;font-size:12.4px;color:#000;">650</span>
<span class="t" style="left:827.1px;top:448.4px;font-size:13.3px;color:#000;letter-spacing:0.032px;">Zakres nastawy [%]</span>
<div class="a" style="left:1025px;top:443px;width:119.5px;height:23px;background:#f0f0f0;box-sizing:border-box;border:1px solid;border-color:#a0a0a0 #fff #fff #a0a0a0"></div>
<span class="t" style="left:1029.5px;top:448.8px;font-size:12.4px;color:#000;">10-100</span>
<span class="t" style="left:827.1px;top:478.4px;font-size:13.3px;color:#000;letter-spacing:-0.074px;">Min. dP [kPa]:</span>
<div class="a" style="left:1025px;top:473px;width:119.5px;height:23px;background:#f0f0f0;box-sizing:border-box;border:1px solid;border-color:#a0a0a0 #fff #fff #a0a0a0"></div>
<span class="t" style="left:1029.5px;top:478.8px;font-size:12.4px;color:#000;">16</span>
<span class="t" style="left:827.1px;top:508.4px;font-size:13.3px;color:#000;letter-spacing:0.068px;">Maks. dP [kPa]:</span>
<div class="a" style="left:1025px;top:503px;width:87.5px;height:23px;background:#f0f0f0;box-sizing:border-box;border:1px solid;border-color:#a0a0a0 #fff #fff #a0a0a0"></div>
<span class="t" style="left:1029.5px;top:508.8px;font-size:12.4px;color:#000;">600</span>
<span class="t" style="left:827.1px;top:538.4px;font-size:13.3px;color:#000;letter-spacing:-0.019px;">Ciśnienie nominalne PN</span>
<div class="a" style="left:1025px;top:533px;width:87.5px;height:23px;background:#f0f0f0;box-sizing:border-box;border:1px solid;border-color:#a0a0a0 #fff #fff #a0a0a0"></div>
<span class="t" style="left:1029.5px;top:538.8px;font-size:12.4px;color:#000;">25</span>
<span class="t" style="left:827.1px;top:568.4px;font-size:13.3px;color:#000;letter-spacing:0.025px;">Temperatura czynnika [°C]</span>
<div class="a" style="left:1025px;top:563px;width:119.5px;height:23px;background:#f0f0f0;box-sizing:border-box;border:1px solid;border-color:#a0a0a0 #fff #fff #a0a0a0"></div>
<span class="t" style="left:1029.5px;top:568.8px;font-size:12.4px;color:#000;">(-10) + 2 ... +95</span>
<span class="t" style="left:827.1px;top:628.4px;font-size:13.3px;color:#000;letter-spacing:-0.034px;">Materiały (korpusy zaworów)</span>
<div class="a" style="left:1025px;top:623px;width:199.5px;height:23px;background:#f0f0f0;box-sizing:border-box;border:1px solid;border-color:#a0a0a0 #fff #fff #a0a0a0"></div>
<span class="t" style="left:1029.5px;top:628.8px;font-size:12.4px;color:#000;">DZR Brass</span>
<span class="t" style="left:827.1px;top:658.4px;font-size:13.3px;color:#000;letter-spacing:-0.111px;">Gwint (b) / Rozmiar kołnierza (a):</span>
<div class="a" style="left:1025px;top:653px;width:119.5px;height:23px;background:#f0f0f0;box-sizing:border-box;border:1px solid;border-color:#a0a0a0 #fff #fff #a0a0a0"></div>
<span class="t" style="left:1029.5px;top:658.8px;font-size:12.4px;color:#000;">G 3/4 A</span>
<span class="t" style="left:827.1px;top:688.4px;font-size:13.3px;color:#000;letter-spacing:-0.166px;">Długość (L):</span>
<div class="a" style="left:1025px;top:683px;width:87.5px;height:23px;background:#f0f0f0;box-sizing:border-box;border:1px solid;border-color:#a0a0a0 #fff #fff #a0a0a0"></div>
<span class="t" style="left:1029.5px;top:688.8px;font-size:12.4px;color:#000;">65</span>
<span class="t" style="left:827.1px;top:718.4px;font-size:13.3px;color:#000;letter-spacing:0.049px;">Wysokość (H1):</span>
<div class="a" style="left:1025px;top:713px;width:87.5px;height:23px;background:#f0f0f0;box-sizing:border-box;border:1px solid;border-color:#a0a0a0 #fff #fff #a0a0a0"></div>
<span class="t" style="left:1029.5px;top:718.8px;font-size:12.4px;color:#000;">38.2</span>
<span class="t" style="left:827.1px;top:748.4px;font-size:13.3px;color:#000;letter-spacing:0.049px;">Wysokość (H2):</span>
<div class="a" style="left:1025px;top:743px;width:87.5px;height:23px;background:#f0f0f0;box-sizing:border-box;border:1px solid;border-color:#a0a0a0 #fff #fff #a0a0a0"></div>
<span class="t" style="left:1029.5px;top:748.8px;font-size:12.4px;color:#000;">118</span>
<span class="t" style="left:827.1px;top:808.4px;font-size:13.3px;color:#000;letter-spacing:-0.253px;">Nr kat.</span>
<div class="a" style="left:1025px;top:803px;width:119.5px;height:23px;background:#f0f0f0;box-sizing:border-box;border:1px solid;border-color:#a0a0a0 #fff #fff #a0a0a0"></div>
<span class="t" style="left:1029.5px;top:808.8px;font-size:12.4px;color:#000;">003Z8201</span>
<div class="a" style="left:947px;top:852px;width:90px;height:26px;background:#e5f1fb;box-sizing:border-box;border:1px solid #0078d7"></div>
<div class="a" style="left:1045px;top:852px;width:98px;height:26px;background:#e1e1e1;box-sizing:border-box;border:1px solid #adadad"></div>
<div class="a" style="left:1151px;top:852px;width:98px;height:26px;background:#e1e1e1;box-sizing:border-box;border:1px solid #adadad"></div>
<div class="a" style="left:1259px;top:852px;width:34px;height:26px;background:#e1e1e1;box-sizing:border-box;border:1px solid #adadad"></div>
<span class="t" style="left:983.3px;top:858.2px;font-size:13.3px;color:#000;letter-spacing:-0.809px;">OK</span>
<span class="t" style="left:1073.4px;top:858.2px;font-size:13.3px;color:#000;letter-spacing:0.002px;">Cancel</span>
<span class="t" style="left:1185.2px;top:858.2px;font-size:13.3px;color:#000;letter-spacing:0.185px;">Help</span>
<span class="t" style="left:1269.1px;top:858.2px;font-size:13.3px;color:#000;letter-spacing:-1.116px;">&gt;&gt;</span>
<svg style="left:1008px;top:859.5px" width="13" height="20" viewBox="0 0 13 20"><path d="M0.5 0.8V16.3L4.1 12.9L6.7 18.9L9.1 17.9L6.6 12H11.5Z" fill="#fff" stroke="#000" stroke-width="1"/></svg>
</body></html>
